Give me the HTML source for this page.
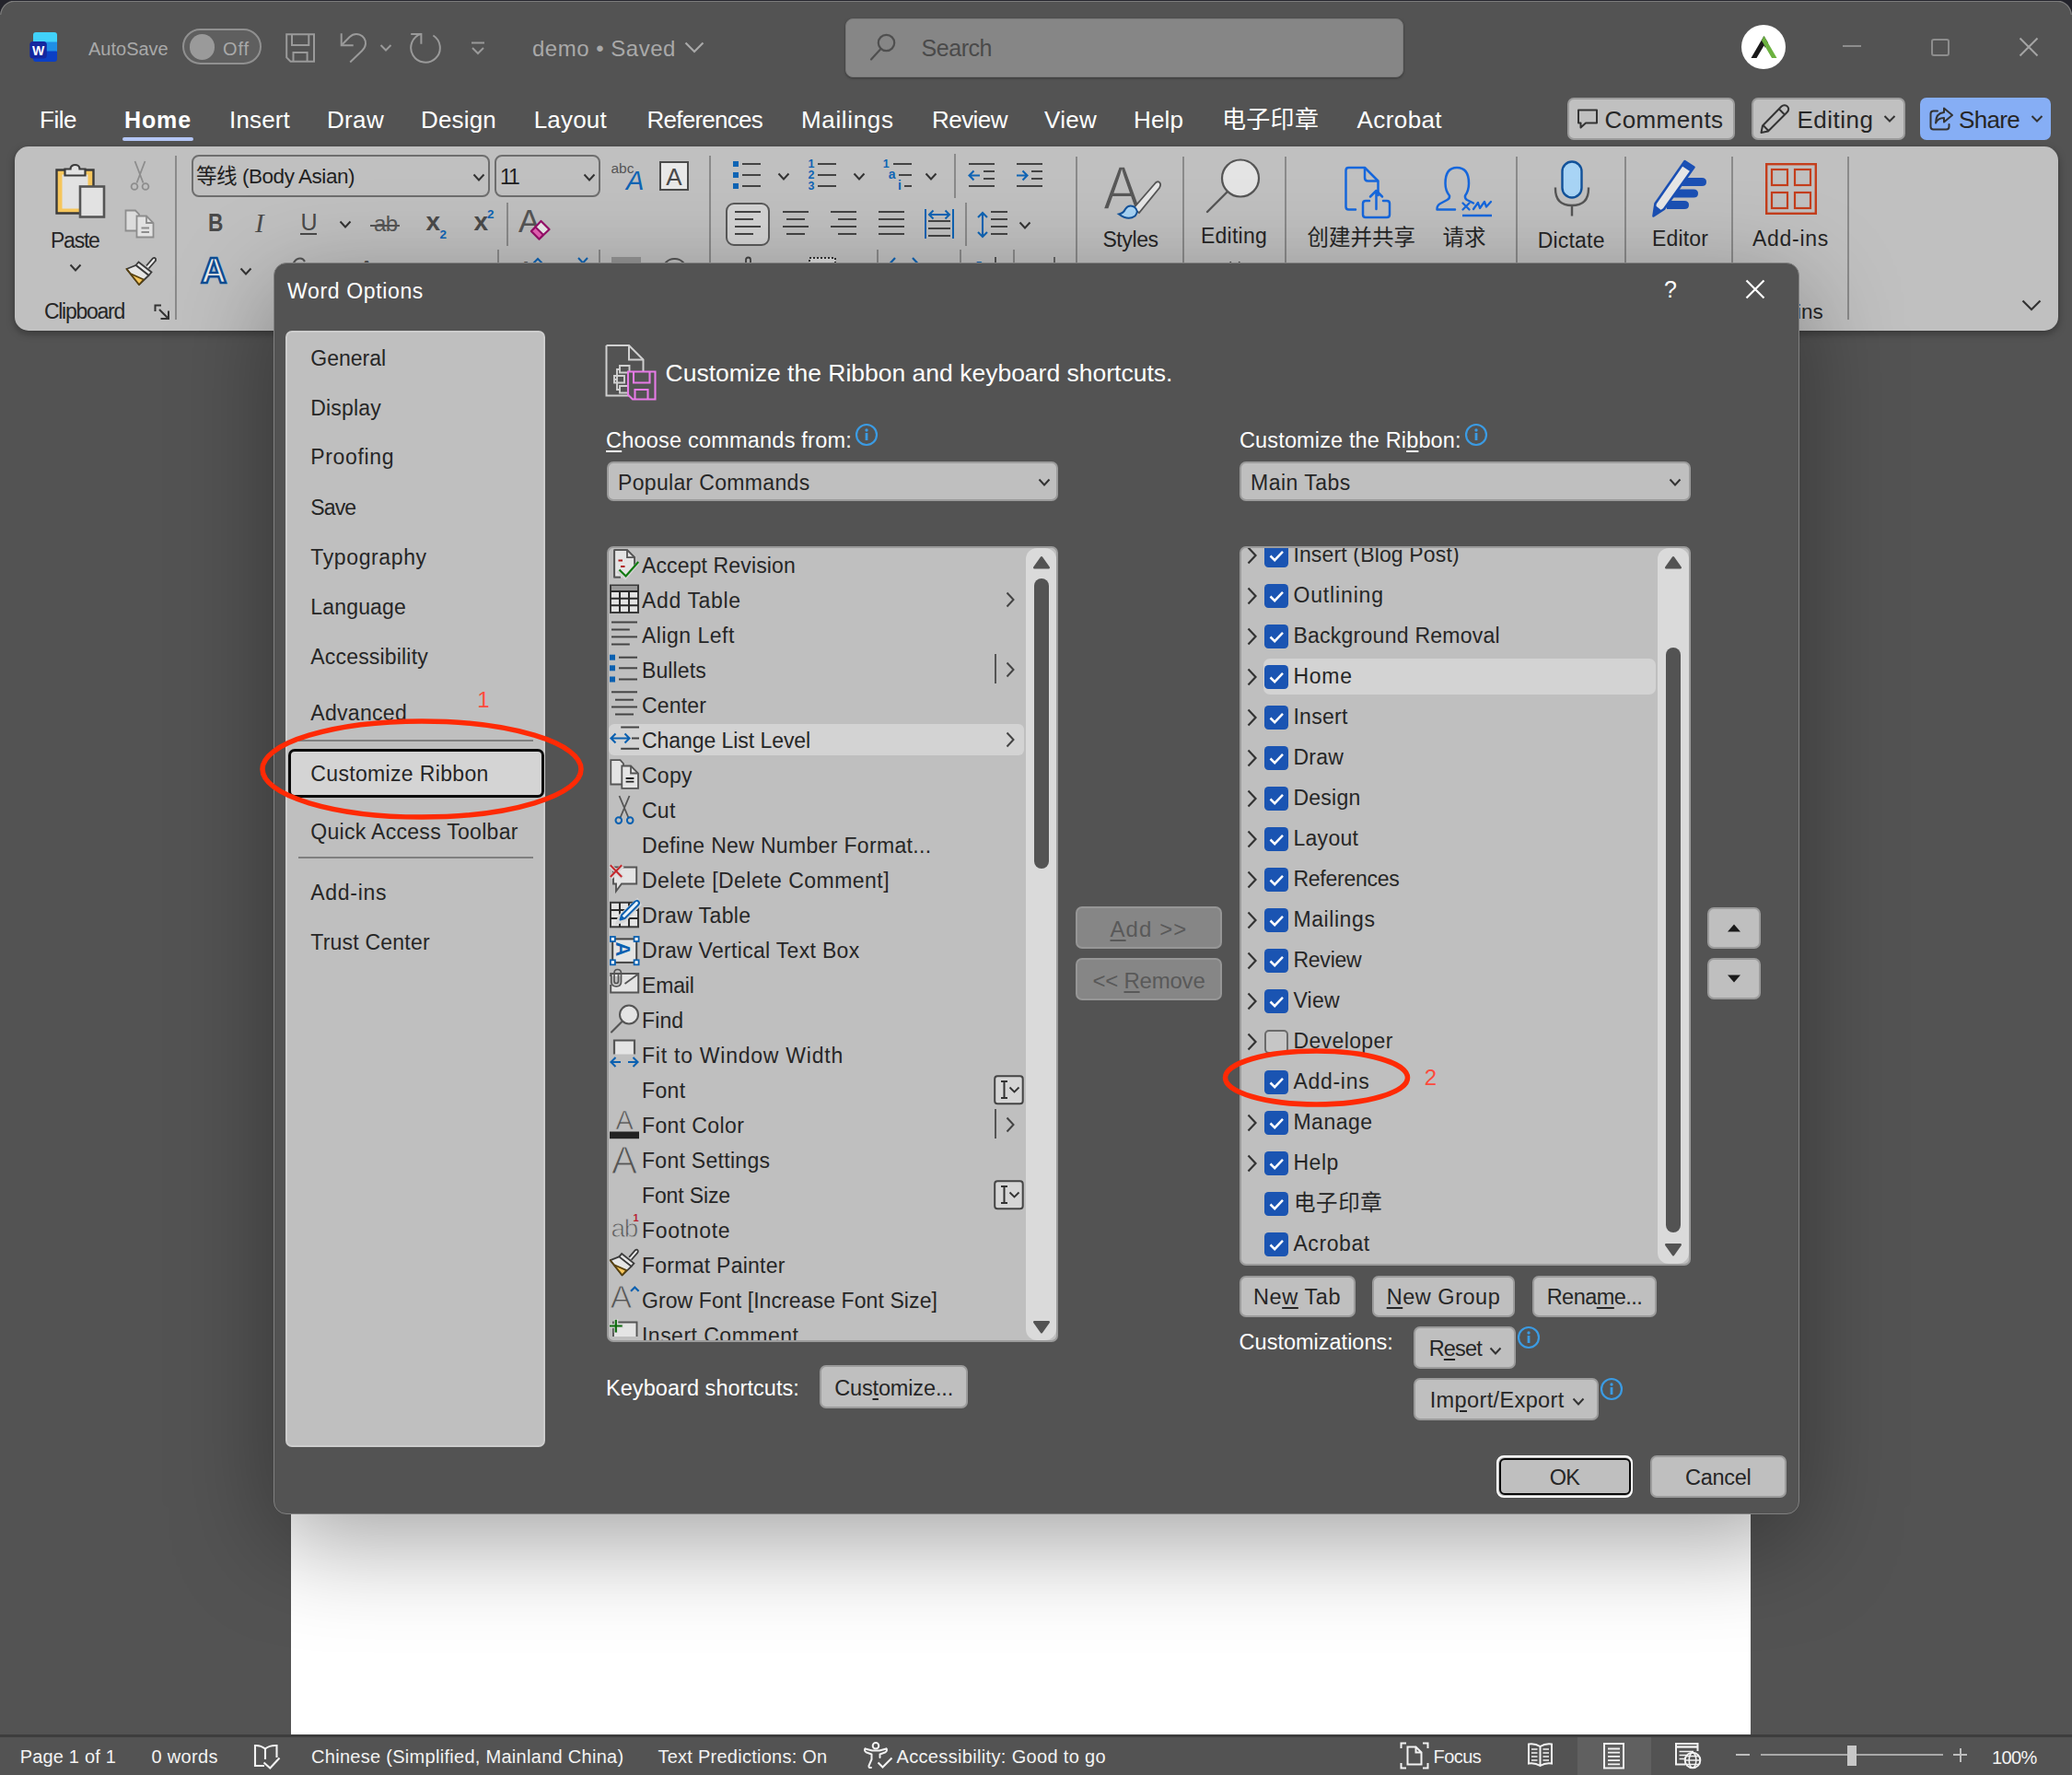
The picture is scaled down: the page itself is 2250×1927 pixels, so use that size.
<!DOCTYPE html>
<html lang="en"><head><meta charset="utf-8"><title>Word Options</title>
<style>
html,body{margin:0;padding:0}
body{width:2250px;height:1927px;overflow:hidden;background:#535353;position:relative;font-family:"Liberation Sans","Noto Sans CJK SC",sans-serif}
.b{position:absolute;box-sizing:border-box;display:block}
.t{position:absolute;white-space:nowrap;overflow:visible}
.t span{display:inline-block}
u{text-decoration:underline;text-underline-offset:3px;text-decoration-thickness:2px}

</style></head>
<body>
<div class="b" style="left:316.0px;top:360.0px;width:1585.0px;height:1524.0px;background:#ffffff;"></div>
<div class="b" style="left:0.0px;top:0.0px;width:2250.0px;height:1.0px;background:#25252d;"></div>
<div class="b" style="left:12.0px;top:1.0px;width:2226.0px;height:1.0px;background:#7c7c7c;"></div>
<svg class="b" style="left:0;top:0" width="16" height="16"><path d="M0 0H16C7 1 1 7 0 16Z" fill="#23232b"/><path d="M0.7 16C1.5 7.5 7.5 1.5 16 1.5" fill="none" stroke="#7c7c7c" stroke-width="1.2"/></svg>
<svg class="b" style="left:2234px;top:0" width="16" height="16"><path d="M16 0H0C9 1 15 7 16 16Z" fill="#23232b"/><path d="M15.3 16C14.5 7.5 8.5 1.5 0 1.5" fill="none" stroke="#7c7c7c" stroke-width="1.2"/></svg>
<svg class="b" style="left:0;top:1911px" width="16" height="16"><path d="M0 16H16C7 15 1 9 0 0Z" fill="#3a4a78"/></svg>
<svg class="b" style="left:2234px;top:1911px" width="16" height="16"><path d="M16 16H0C9 15 15 9 16 0Z" fill="#3a4a78"/></svg>
<svg class="b" style="left:31.0px;top:34.0px;" width="33" height="34" viewBox="0 0 33 34">
<rect x="5" y="1" width="26" height="12" rx="3" fill="#41d2fa"/>
<rect x="5" y="10" width="26" height="12" fill="#1f8fe6"/>
<rect x="5" y="20" width="26" height="13" rx="3" fill="#0b3fc4"/>
<rect x="5" y="8" width="26" height="3.5" fill="#41d2fa"/>
<rect x="5" y="17.5" width="26" height="4" fill="#1f8fe6"/>
<rect x="1.3" y="11" width="18.5" height="18.5" rx="3.5" fill="#1428a0"/>
<text x="10.6" y="25.5" font-family="Liberation Sans,sans-serif" font-weight="700" font-size="14" fill="#fff" text-anchor="middle">W</text>
</svg>
<div class="t" style="top:32.7px;height:40px;line-height:40px;font-size:20.0px;color:#a9a9a9;left:96.0px;"><span id="t1">AutoSave</span></div>
<div class="b" style="left:198.0px;top:31.0px;width:86.0px;height:39.0px;background:#5f5f5f;border:2.5px solid #909090;border-radius:20px;"></div>
<div class="b" style="left:205.5px;top:37.0px;width:27.5px;height:27.5px;background:#9a9a9a;border-radius:14px;"></div>
<div class="t" style="top:32.7px;height:40px;line-height:40px;font-size:20.0px;color:#a9a9a9;left:242.0px;letter-spacing:0.90px;"><span id="t2">Off</span></div>
<svg class="b" style="left:308.0px;top:34.0px;" width="36" height="36" viewBox="0 0 36 36"><path d="M3.2 3.2H33V32.7H7.5L3.2 28.4Z" fill="none" stroke="#9a9a9a" stroke-width="2"/><path d="M9 3.2V15H27.3V3.2M10.5 32.7V23H25.6V32.7" fill="none" stroke="#9a9a9a" stroke-width="2"/></svg>
<svg class="b" style="left:368.0px;top:34.0px;" width="34" height="36" viewBox="0 0 34 36"><path d="M2.7 2.2V15.2H15.7" fill="none" stroke="#9a9a9a" stroke-width="2"/><path d="M3.2 14.7L11.5 6.2Q16.5 1.6 22.5 3.6Q29.2 6.5 29 13.5Q28.8 17.5 25 21.2L12.2 33.5" fill="none" stroke="#9a9a9a" stroke-width="2"/></svg>
<svg class="b" style="left:412.0px;top:47.0px;" width="14" height="10" viewBox="0 0 14 10"><path d="M1.5 2L7 7.5L12.5 2" fill="none" stroke="#9a9a9a" stroke-width="2"/></svg>
<svg class="b" style="left:444.0px;top:34.0px;" width="36" height="36" viewBox="0 0 36 36"><path d="M13.4 2.8A15.8 15.8 0 1 0 26.4 4.5" fill="none" stroke="#9a9a9a" stroke-width="2"/><path d="M2.2 3.1H13.4V13.8" fill="none" stroke="#9a9a9a" stroke-width="2"/></svg>
<svg class="b" style="left:510.0px;top:44.0px;" width="18" height="18" viewBox="0 0 18 18"><path d="M2 2.5H16" stroke="#9a9a9a" stroke-width="2" fill="none"/><path d="M3 8L9 14L15 8" fill="none" stroke="#9a9a9a" stroke-width="2"/></svg>
<div class="t" style="top:28.7px;height:48px;line-height:48px;font-size:24.0px;color:#a9a9a9;left:578.0px;letter-spacing:0.51px;"><span id="t3">demo • Saved</span></div>
<svg class="b" style="left:743.0px;top:45.0px;" width="22" height="14" viewBox="0 0 22 14"><path d="M1.5 1.5L11 11L20.5 1.5" fill="none" stroke="#a9a9a9" stroke-width="2.2"/></svg>
<div class="b" style="left:917.5px;top:19.5px;width:606.5px;height:64.0px;background:#868686;border:1.5px solid #7a7a7a;border-radius:8px;box-shadow:0 1px 3px rgba(0,0,0,.35);"></div>
<svg class="b" style="left:944.0px;top:35.0px;" width="30" height="32" viewBox="0 0 30 32"><circle cx="18.5" cy="11.5" r="8.7" fill="none" stroke="#4f4f4f" stroke-width="2.2"/><path d="M12.5 18L2 29.5" stroke="#4f4f4f" stroke-width="2.2" stroke-linecap="round"/></svg>
<div class="t" style="top:26.5px;height:50px;line-height:50px;font-size:25.0px;color:#4a4a4a;left:1000.5px;letter-spacing:-0.45px;"><span id="t4">Search</span></div>
<div class="b" style="left:1891.0px;top:27.0px;width:48.0px;height:48.0px;background:#ffffff;border-radius:24px;"></div>
<svg class="b" style="left:1891.0px;top:27.0px;" width="48" height="48" viewBox="0 0 48 48"><path d="M11 35.5L24 13.5L37 35.5" fill="none" stroke="#161616" stroke-width="0"/><path d="M10.5 36L24.5 12L29 19.5L19.5 36Z" fill="#1a1a1a"/><path d="M24.5 12L38.5 36H33L22 17Z" fill="#6bb13f"/><path d="M16.5 36L24.5 22.5L32.5 36H28.5L24.5 29L20.5 36Z" fill="#fff"/><path d="M20 36L24.5 28L29 36Z" fill="#fff"/></svg>
<div class="b" style="left:2001.0px;top:49.0px;width:20.0px;height:2.0px;background:#8d8d8d;"></div>
<div class="b" style="left:2097.0px;top:41.5px;width:20.0px;height:19.5px;border:2px solid #8d8d8d;border-radius:3px;"></div>
<svg class="b" style="left:2192.0px;top:40.0px;" width="22" height="22" viewBox="0 0 22 22"><path d="M1.5 1.5L20.5 20.5M20.5 1.5L1.5 20.5" stroke="#a5a5a5" stroke-width="2" fill="none"/></svg>
<div class="t" style="top:104.0px;height:52px;line-height:52px;font-size:26.0px;color:#ffffff;left:43.0px;letter-spacing:-0.48px;"><span id="t5">File</span></div>
<div class="t" style="top:105.0px;height:50px;line-height:50px;font-size:25px;color:#ffffff;left:135.0px;letter-spacing:0.88px;font-weight:700;"><span id="t6">Home</span></div>
<div class="t" style="top:104.0px;height:52px;line-height:52px;font-size:26.0px;color:#ffffff;left:249.0px;letter-spacing:0.16px;"><span id="t7">Insert</span></div>
<div class="t" style="top:104.0px;height:52px;line-height:52px;font-size:26.0px;color:#ffffff;left:355.0px;letter-spacing:0.33px;"><span id="t8">Draw</span></div>
<div class="t" style="top:104.0px;height:52px;line-height:52px;font-size:26.0px;color:#ffffff;left:457.0px;letter-spacing:0.18px;"><span id="t9">Design</span></div>
<div class="t" style="top:104.0px;height:52px;line-height:52px;font-size:26.0px;color:#ffffff;left:579.7px;letter-spacing:0.20px;"><span id="t10">Layout</span></div>
<div class="t" style="top:104.0px;height:52px;line-height:52px;font-size:26.0px;color:#ffffff;left:702.5px;letter-spacing:-0.75px;"><span id="t11">References</span></div>
<div class="t" style="top:104.0px;height:52px;line-height:52px;font-size:26.0px;color:#ffffff;left:870.0px;letter-spacing:0.65px;"><span id="t12">Mailings</span></div>
<div class="t" style="top:104.0px;height:52px;line-height:52px;font-size:26.0px;color:#ffffff;left:1012.0px;letter-spacing:-0.54px;"><span id="t13">Review</span></div>
<div class="t" style="top:104.0px;height:52px;line-height:52px;font-size:26.0px;color:#ffffff;left:1134.0px;letter-spacing:0.28px;"><span id="t14">View</span></div>
<div class="t" style="top:104.0px;height:52px;line-height:52px;font-size:26.0px;color:#ffffff;left:1231.0px;letter-spacing:0.13px;"><span id="t15">Help</span></div>
<div class="t" style="top:103.5px;height:52px;line-height:52px;font-size:26px;color:#ffffff;left:1327.0px;letter-spacing:0.3px;"><span id="t16">电子印章</span></div>
<div class="t" style="top:104.0px;height:52px;line-height:52px;font-size:26.0px;color:#ffffff;left:1473.6px;letter-spacing:0.40px;"><span id="t17">Acrobat</span></div>
<div class="b" style="left:133.0px;top:149.0px;width:77.0px;height:4.0px;background:#b4c6f5;border-radius:2px;"></div>
<div class="b" style="left:1701.5px;top:105.5px;width:182.5px;height:46.5px;background:#c0c0c0;border:2px solid #9c9c9c;border-radius:7px;"></div>
<div class="b" style="left:1902.0px;top:105.5px;width:166.5px;height:46.5px;background:#c0c0c0;border:2px solid #9c9c9c;border-radius:7px;"></div>
<div class="b" style="left:2085.0px;top:105.5px;width:142.0px;height:46.5px;background:#86aef5;border-radius:7px;"></div>
<svg class="b" style="left:1711.0px;top:116.0px;" width="26" height="26" viewBox="0 0 26 26"><path d="M3 3.5H23V17.5H11L5.5 22.5V17.5H3Z" fill="none" stroke="#333" stroke-width="2" stroke-linejoin="round"/></svg>
<div class="t" style="top:103.5px;height:52px;line-height:52px;font-size:26.0px;color:#262626;left:1742.5px;letter-spacing:0.41px;"><span id="t18">Comments</span></div>
<svg class="b" style="left:1910.0px;top:112.0px;" width="34" height="34" viewBox="0 0 34 34"><path d="M24.5 3.5C26.5 1.5 29.5 2 31 3.7C32.5 5.5 32.5 8 30.5 10L10 30.5L2.5 32L4 24.5Z M22 6.5L28 12.5 M4.5 24L10.5 30" fill="none" stroke="#333" stroke-width="2" stroke-linejoin="round"/></svg>
<div class="t" style="top:103.5px;height:52px;line-height:52px;font-size:26.0px;color:#262626;left:1951.5px;letter-spacing:0.50px;"><span id="t19">Editing</span></div>
<svg class="b" style="left:2045.0px;top:124.0px;" width="14" height="10" viewBox="0 0 14 10"><path d="M1.5 2L7 7.5L12.5 2" fill="none" stroke="#333" stroke-width="2"/></svg>
<svg class="b" style="left:2093.0px;top:114.0px;" width="30" height="30" viewBox="0 0 30 30"><path d="M11 6.5H6.5Q3.5 6.5 3.5 9.5V23.5Q3.5 26.5 6.5 26.5H20.5Q23.5 26.5 23.5 23.5V21" fill="none" stroke="#333" stroke-width="2" stroke-linecap="round"/><path d="M18 3.5L27 11L18 18.5V14C13 14 10.5 16 9 19.5C9 12.5 12.5 8.5 18 8Z" fill="none" stroke="#333" stroke-width="2" stroke-linejoin="round"/></svg>
<div class="t" style="top:103.5px;height:52px;line-height:52px;font-size:26.0px;color:#262626;left:2127.0px;letter-spacing:-0.68px;"><span id="t20">Share</span></div>
<svg class="b" style="left:2205.0px;top:124.0px;" width="14" height="10" viewBox="0 0 14 10"><path d="M1.5 2L7 7.5L12.5 2" fill="none" stroke="#333" stroke-width="2"/></svg>
<div class="b" style="left:16.0px;top:159.0px;width:2219.0px;height:200.0px;background:#c0c0c0;border-radius:15px;box-shadow:0 3px 8px rgba(0,0,0,.35);"></div>
<svg class="b" style="left:58.0px;top:176.0px;" width="58" height="62" viewBox="0 0 58 62">
<path d="M3.5 8.5H43.5V55.5H3.5Z" fill="#f6c65c" stroke="#3b3b3b" stroke-width="2.4"/>
<path d="M9.5 13.5H37.5V50.5H9.5Z" fill="#e2e2e2"/>
<path d="M12.5 14.5V7.5H18.5C18.5 1.5 28.5 1.5 28.5 7.5H34.5V14.5Z" fill="#e2e2e2" stroke="#3b3b3b" stroke-width="2.2"/>
<rect x="29" y="26.5" width="26" height="33" fill="#e2e2e2" stroke="#555" stroke-width="2.6"/>
</svg>
<div class="t" style="top:238.0px;height:46px;line-height:46px;font-size:23.0px;color:#262626;left:55.0px;letter-spacing:-1.23px;"><span id="t21">Paste</span></div>
<svg class="b" style="left:74.5px;top:286.0px;" width="14" height="10" viewBox="0 0 14 10"><path d="M1.5 1.5L7.0 7.5L12.5 1.5" fill="none" stroke="#333" stroke-width="2"/></svg>
<svg class="b" style="left:141.0px;top:174.0px;" width="22" height="34" viewBox="0 0 22 34"><path d="M5.5 1L14.5 24.5M16.5 1L7.5 24.5" stroke="#8d8d8d" stroke-width="1.8" fill="none"/><circle cx="5" cy="28.5" r="3.4" fill="none" stroke="#8d8d8d" stroke-width="1.8"/><circle cx="17" cy="28.5" r="3.4" fill="none" stroke="#8d8d8d" stroke-width="1.8"/></svg>
<svg class="b" style="left:135.0px;top:226.0px;" width="34" height="34" viewBox="0 0 34 34"><path d="M1.5 2.5H12L16 6.5V24.5H1.5Z" fill="#dcdcdc" stroke="#8d8d8d" stroke-width="1.8"/><path d="M13.5 8.5H24L31.5 16V31.5H13.5Z" fill="#e2e2e2" stroke="#8d8d8d" stroke-width="1.8"/><path d="M24 8.5V16H31.5" fill="none" stroke="#8d8d8d" stroke-width="1.8"/><path d="M18.5 21.5H27M18.5 26H27" stroke="#8d8d8d" stroke-width="1.8"/></svg>
<svg class="b" style="left:135.0px;top:278.0px;" width="35" height="33" viewBox="0 0 35 33"><path d="M24 10.5L31 2.5Q33 1 34 3Q34.5 4.5 33.5 5.5L26.5 13.5" fill="#eee" stroke="#3b3b3b" stroke-width="1.8"/><path d="M15.5 6.5L29.5 17.5L26.5 21L12.5 10Z" fill="#e6e6e6" stroke="#3b3b3b" stroke-width="1.8"/><path d="M12.5 10L26.5 21L16 31L2.5 14Z" fill="#e6e6e6" stroke="#3b3b3b" stroke-width="1.8" stroke-linejoin="round"/><path d="M6.5 19L21 25.5L16 31L2.5 14Z" fill="#f6c65c" stroke="#5a4310" stroke-width="1.8" stroke-linejoin="round"/></svg>
<div class="t" style="top:315.4px;height:46px;line-height:46px;font-size:23.0px;color:#262626;left:47.9px;letter-spacing:-1.27px;"><span id="t22">Clipboard</span></div>
<svg class="b" style="left:167.0px;top:330.0px;" width="18" height="18" viewBox="0 0 18 18"><path d="M1.5 8V1.5H8" fill="none" stroke="#333" stroke-width="2"/><path d="M6 6L15.5 15.5M16 7.5V16H7.5" fill="none" stroke="#333" stroke-width="2"/></svg>
<div class="b" style="left:189.7px;top:169.0px;width:2.0px;height:177.5px;background:#8a8a8a;"></div>
<div class="b" style="left:208.0px;top:167.5px;width:323.5px;height:46.5px;border:2px solid #6e6e6e;border-radius:8px;"></div>
<div class="b" style="left:536.5px;top:167.5px;width:115.5px;height:46.5px;border:2px solid #6e6e6e;border-radius:8px;"></div>
<div class="t" style="top:168.7px;height:45px;line-height:45px;font-size:22.5px;color:#1f1f1f;left:213.0px;letter-spacing:-0.45px;"><span id="t23">等线 (Body Asian)</span></div>
<svg class="b" style="left:513.0px;top:187.5px;" width="14" height="10" viewBox="0 0 14 10"><path d="M1.5 1.5L7.0 7.5L12.5 1.5" fill="none" stroke="#333" stroke-width="2"/></svg>
<div class="t" style="top:168.7px;height:46px;line-height:46px;font-size:23.0px;color:#1f1f1f;left:543.0px;letter-spacing:-2.20px;"><span id="t24">11</span></div>
<svg class="b" style="left:632.5px;top:187.5px;" width="14" height="10" viewBox="0 0 14 10"><path d="M1.5 1.5L7.0 7.5L12.5 1.5" fill="none" stroke="#333" stroke-width="2"/></svg>
<div class="t" style="top:166.5px;height:31px;line-height:31px;font-size:15.5px;color:#555;left:663.4px;"><span id="t25">abc</span></div>
<div class="t" style="top:166.5px;height:58px;line-height:58px;font-size:29px;color:#0f64b4;left:680.0px;font-style:italic;"><span id="t26">A</span></div>
<div class="b" style="left:716.0px;top:175.0px;width:32.0px;height:32.0px;background:#e8e8e8;border:2.2px solid #4a4a4a;"></div>
<div class="t" style="top:165.5px;height:52px;line-height:52px;font-size:26px;color:#4a4a4a;left:232.0px;width:1000px;text-align:center;"><span id="t27">A</span></div>
<div class="b" style="left:770.0px;top:169.0px;width:2.0px;height:123.0px;background:#8a8a8a;"></div>
<div class="t" style="top:214.5px;height:54px;line-height:54px;font-size:27px;color:#4a4a4a;left:225.5px;font-weight:700;transform:scaleX(.84);transform-origin:left center;"><span id="t28">B</span></div>
<div class="t" style="top:212.5px;height:58px;line-height:58px;font-size:29px;color:#4a4a4a;left:277.0px;font-family:'Liberation Serif',serif;font-style:italic;"><span id="t29">I</span></div>
<div class="t" style="top:215.5px;height:50px;line-height:50px;font-size:25px;color:#4a4a4a;left:326.5px;"><span id="t30">U</span></div>
<div class="b" style="left:326.0px;top:252.8px;width:18.0px;height:2.0px;background:#4a4a4a;"></div>
<svg class="b" style="left:367.5px;top:238.5px;" width="14" height="10" viewBox="0 0 14 10"><path d="M1.5 1.5L7.0 7.5L12.5 1.5" fill="none" stroke="#333" stroke-width="2"/></svg>
<div class="t" style="top:219.0px;height:48px;line-height:48px;font-size:24px;color:#555;left:406.0px;letter-spacing:-0.5px;"><span id="t31">ab</span></div>
<div class="b" style="left:402.0px;top:244.3px;width:32.0px;height:1.7px;background:#555;"></div>
<div class="t" style="top:213.0px;height:56px;line-height:56px;font-size:28px;color:#4a4a4a;left:462.5px;font-weight:700;"><span id="t32">x</span></div>
<div class="t" style="top:240.5px;height:27px;line-height:27px;font-size:13.5px;color:#0f64b4;left:477.5px;font-weight:700;"><span id="t33">2</span></div>
<div class="t" style="top:213.0px;height:56px;line-height:56px;font-size:28px;color:#4a4a4a;left:514.5px;font-weight:700;"><span id="t34">x</span></div>
<div class="t" style="top:218.5px;height:27px;line-height:27px;font-size:13.5px;color:#0f64b4;left:529.0px;font-weight:700;"><span id="t35">2</span></div>
<div class="b" style="left:549.8px;top:219.7px;width:2.0px;height:46.9px;background:#8a8a8a;"></div>
<div class="t" style="top:204.5px;height:70px;line-height:70px;font-size:35px;color:#555;left:563.0px;"><span id="t36">A</span></div>
<svg class="b" style="left:575.0px;top:238.0px;" width="24" height="23" viewBox="0 0 24 23"><path d="M12.5 2L21.5 11L10.5 21.5L2 13Z" fill="#ececec" stroke="#97106a" stroke-width="2.2" stroke-linejoin="round"/><path d="M6.5 8.5L15 17L10.5 21.5L2 13Z" fill="#e861b5" stroke="#97106a" stroke-width="2" stroke-linejoin="round"/></svg>
<div class="t" style="top:255.0px;height:78px;line-height:78px;font-size:39px;color:#ececec;left:-268.0px;width:1000px;text-align:center;font-weight:700;-webkit-text-stroke:2.4px #0f4d92;text-shadow:0 0 3px #9fd0f5,0 0 3px #9fd0f5,0 0 2px #9fd0f5;"><span id="t37">A</span></div>
<svg class="b" style="left:259.5px;top:290.0px;" width="14" height="10" viewBox="0 0 14 10"><path d="M1.5 1.5L7.0 7.5L12.5 1.5" fill="none" stroke="#333" stroke-width="2"/></svg>
<svg class="b" style="left:310.0px;top:276.0px;" width="30" height="12" viewBox="0 0 30 12"><path d="M8 12C10 4 18 2 21 8" fill="none" stroke="#555" stroke-width="2"/></svg>
<div class="t" style="top:263.0px;height:60px;line-height:60px;font-size:30px;color:#555;left:-102.0px;width:1000px;text-align:center;"><span id="t38">A</span></div>
<div class="b" style="left:539.8px;top:271.0px;width:2.0px;height:21.0px;background:#8a8a8a;"></div>
<div class="t" style="top:264.0px;height:60px;line-height:60px;font-size:30px;color:#555;left:71.0px;width:1000px;text-align:center;"><span id="t39">A</span></div>
<svg class="b" style="left:578.0px;top:279.0px;" width="12" height="8" viewBox="0 0 12 8"><path d="M1.5 6.5L6 2L10.5 6.5" fill="none" stroke="#0f64b4" stroke-width="2"/></svg>
<svg class="b" style="left:626.0px;top:279.0px;" width="14" height="8" viewBox="0 0 14 8"><path d="M2 1L7 6.5L12 1" fill="none" stroke="#0f64b4" stroke-width="2"/></svg>
<div class="b" style="left:650.2px;top:271.0px;width:2.0px;height:21.0px;background:#8a8a8a;"></div>
<div class="b" style="left:664.0px;top:279.0px;width:32.0px;height:13.0px;background:#959595;"></div>
<div class="b" style="left:718.5px;top:279.5px;width:27.0px;height:26.5px;border:2px solid #555;border-radius:14px;"></div>
<div class="b" style="left:796.0px;top:174.8px;width:6.0px;height:6.0px;background:#0f64b4;"></div>
<div class="b" style="left:805.7px;top:176.8px;width:20.3px;height:2.0px;background:#444;"></div>
<div class="b" style="left:796.0px;top:187.1px;width:6.0px;height:6.0px;background:#0f64b4;"></div>
<div class="b" style="left:805.7px;top:189.1px;width:20.3px;height:2.0px;background:#444;"></div>
<div class="b" style="left:796.0px;top:198.9px;width:6.0px;height:6.0px;background:#0f64b4;"></div>
<div class="b" style="left:805.7px;top:200.9px;width:20.3px;height:2.0px;background:#444;"></div>
<svg class="b" style="left:844.0px;top:187.0px;" width="14" height="10" viewBox="0 0 14 10"><path d="M1.5 1.5L7.0 7.5L12.5 1.5" fill="none" stroke="#333" stroke-width="2"/></svg>
<div class="t" style="top:165.6px;height:25px;line-height:25px;font-size:12.5px;color:#0f64b4;left:381.0px;width:1000px;text-align:center;font-weight:700;"><span id="t40">1</span></div>
<div class="b" style="left:888.0px;top:176.8px;width:20.0px;height:2.0px;background:#444;"></div>
<div class="t" style="top:177.9px;height:25px;line-height:25px;font-size:12.5px;color:#0f64b4;left:381.0px;width:1000px;text-align:center;font-weight:700;"><span id="t41">2</span></div>
<div class="b" style="left:888.0px;top:189.1px;width:20.0px;height:2.0px;background:#444;"></div>
<div class="t" style="top:189.7px;height:25px;line-height:25px;font-size:12.5px;color:#0f64b4;left:381.0px;width:1000px;text-align:center;font-weight:700;"><span id="t42">3</span></div>
<div class="b" style="left:888.0px;top:200.9px;width:20.0px;height:2.0px;background:#444;"></div>
<svg class="b" style="left:925.7px;top:187.0px;" width="14" height="10" viewBox="0 0 14 10"><path d="M1.5 1.5L7.0 7.5L12.5 1.5" fill="none" stroke="#333" stroke-width="2"/></svg>
<div class="t" style="top:165.5px;height:25px;line-height:25px;font-size:12.5px;color:#0f64b4;left:462.3px;width:1000px;text-align:center;font-weight:700;"><span id="t43">1</span></div>
<div class="b" style="left:970.4px;top:176.8px;width:19.6px;height:2.0px;background:#444;"></div>
<div class="t" style="top:175.3px;height:28px;line-height:28px;font-size:14px;color:#0f64b4;left:468.7px;width:1000px;text-align:center;font-weight:700;"><span id="t44">a</span></div>
<div class="b" style="left:976.0px;top:189.1px;width:14.0px;height:2.0px;background:#444;"></div>
<div class="t" style="top:186.6px;height:28px;line-height:28px;font-size:14px;color:#0f64b4;left:477.0px;width:1000px;text-align:center;font-weight:700;"><span id="t45">i</span></div>
<div class="b" style="left:982.4px;top:200.9px;width:7.6px;height:2.0px;background:#444;"></div>
<svg class="b" style="left:1003.7px;top:187.0px;" width="14" height="10" viewBox="0 0 14 10"><path d="M1.5 1.5L7.0 7.5L12.5 1.5" fill="none" stroke="#333" stroke-width="2"/></svg>
<div class="b" style="left:1036.0px;top:167.0px;width:2.0px;height:47.8px;background:#8a8a8a;"></div>
<div class="b" style="left:1052.0px;top:176.8px;width:27.8px;height:2.0px;background:#444;"></div>
<div class="b" style="left:1052.0px;top:200.9px;width:27.8px;height:2.0px;background:#444;"></div>
<div class="b" style="left:1068.0px;top:184.9px;width:11.8px;height:2.0px;background:#444;"></div>
<div class="b" style="left:1068.0px;top:193.2px;width:11.8px;height:2.0px;background:#444;"></div>
<svg class="b" style="left:1051.0px;top:183.5px;" width="14" height="13" viewBox="0 0 14 13"><path d="M1.5 6.5H13M6.5 1.5L1.5 6.5L6.5 11.5" fill="none" stroke="#0f64b4" stroke-width="2.1"/></svg>
<div class="b" style="left:1104.0px;top:176.8px;width:28.0px;height:2.0px;background:#444;"></div>
<div class="b" style="left:1104.0px;top:200.9px;width:28.0px;height:2.0px;background:#444;"></div>
<div class="b" style="left:1120.4px;top:184.9px;width:11.6px;height:2.0px;background:#444;"></div>
<div class="b" style="left:1120.4px;top:193.2px;width:11.6px;height:2.0px;background:#444;"></div>
<svg class="b" style="left:1103.0px;top:183.5px;" width="14" height="13" viewBox="0 0 14 13"><path d="M1 6.5H12.5M7.5 1.5L12.5 6.5L7.5 11.5" fill="none" stroke="#0f64b4" stroke-width="2.1"/></svg>
<div class="b" style="left:788.3px;top:219.7px;width:47.3px;height:46.9px;background:#d4d4d4;border:2px solid #5a5a5a;border-radius:9px;"></div>
<div class="b" style="left:798.0px;top:228.9px;width:28.0px;height:2.0px;background:#444;"></div>
<div class="b" style="left:850.0px;top:228.9px;width:28.0px;height:2.0px;background:#444;"></div>
<div class="b" style="left:901.9px;top:228.9px;width:27.9px;height:2.0px;background:#444;"></div>
<div class="b" style="left:954.0px;top:228.9px;width:28.0px;height:2.0px;background:#444;"></div>
<div class="b" style="left:1076.0px;top:228.9px;width:18.0px;height:2.0px;background:#444;"></div>
<div class="b" style="left:798.0px;top:237.0px;width:19.7px;height:2.0px;background:#444;"></div>
<div class="b" style="left:854.0px;top:237.0px;width:20.0px;height:2.0px;background:#444;"></div>
<div class="b" style="left:910.0px;top:237.0px;width:19.8px;height:2.0px;background:#444;"></div>
<div class="b" style="left:954.0px;top:237.0px;width:28.0px;height:2.0px;background:#444;"></div>
<div class="b" style="left:1076.0px;top:237.0px;width:18.0px;height:2.0px;background:#444;"></div>
<div class="b" style="left:798.0px;top:245.0px;width:28.0px;height:2.0px;background:#444;"></div>
<div class="b" style="left:850.0px;top:245.0px;width:28.0px;height:2.0px;background:#444;"></div>
<div class="b" style="left:901.9px;top:245.0px;width:27.9px;height:2.0px;background:#444;"></div>
<div class="b" style="left:954.0px;top:245.0px;width:28.0px;height:2.0px;background:#444;"></div>
<div class="b" style="left:1076.0px;top:245.0px;width:18.0px;height:2.0px;background:#444;"></div>
<div class="b" style="left:798.0px;top:253.0px;width:19.7px;height:2.0px;background:#444;"></div>
<div class="b" style="left:854.0px;top:253.0px;width:20.0px;height:2.0px;background:#444;"></div>
<div class="b" style="left:910.0px;top:253.0px;width:19.8px;height:2.0px;background:#444;"></div>
<div class="b" style="left:954.0px;top:253.0px;width:28.0px;height:2.0px;background:#444;"></div>
<div class="b" style="left:1076.0px;top:253.0px;width:18.0px;height:2.0px;background:#444;"></div>
<div class="b" style="left:1003.6px;top:227.0px;width:2.2px;height:32.0px;background:#0f64b4;"></div>
<div class="b" style="left:1034.3px;top:227.0px;width:2.2px;height:32.0px;background:#0f64b4;"></div>
<div class="b" style="left:1008.4px;top:239.0px;width:23.2px;height:2.0px;background:#444;"></div>
<div class="b" style="left:1008.4px;top:247.0px;width:23.2px;height:2.0px;background:#444;"></div>
<div class="b" style="left:1008.4px;top:255.0px;width:23.2px;height:2.0px;background:#444;"></div>
<svg class="b" style="left:1007.0px;top:226.5px;" width="26" height="12" viewBox="0 0 26 12"><path d="M2 6H24M6.5 1.5L2 6L6.5 10.5M19.5 1.5L24 6L19.5 10.5" fill="none" stroke="#0f64b4" stroke-width="2"/></svg>
<div class="b" style="left:1048.0px;top:219.7px;width:2.0px;height:46.9px;background:#8a8a8a;"></div>
<svg class="b" style="left:1060.0px;top:228.5px;" width="14" height="30" viewBox="0 0 14 30"><path d="M7 2V28M2 7L7 2L12 7M2 23L7 28L12 23" fill="none" stroke="#0f64b4" stroke-width="2.1"/></svg>
<svg class="b" style="left:1106.0px;top:239.5px;" width="14" height="10" viewBox="0 0 14 10"><path d="M1.5 1.5L7.0 7.5L12.5 1.5" fill="none" stroke="#333" stroke-width="2"/></svg>
<div class="b" style="left:952.0px;top:271.0px;width:2.0px;height:21.0px;background:#8a8a8a;"></div>
<div class="b" style="left:1041.8px;top:271.0px;width:2.0px;height:21.0px;background:#8a8a8a;"></div>
<div class="b" style="left:1099.7px;top:271.0px;width:2.0px;height:21.0px;background:#8a8a8a;"></div>
<svg class="b" style="left:878.0px;top:278.5px;" width="30" height="10" viewBox="0 0 30 10"><rect x="1" y="1" width="28" height="12" fill="#dcdcdc" stroke="#333" stroke-width="2" stroke-dasharray="2 2"/></svg>
<svg class="b" style="left:965.0px;top:279.0px;" width="34" height="8" viewBox="0 0 34 8"><path d="M7 1L1.5 7M26 1L31.5 7" stroke="#0f64b4" stroke-width="2.2" fill="none"/></svg>
<div class="t" style="top:266.0px;height:56px;line-height:56px;font-size:28px;color:#0f64b4;left:563.0px;width:1000px;text-align:center;font-weight:700;"><span id="t46">A</span></div>
<div class="b" style="left:1080.0px;top:279.0px;width:2.0px;height:13.0px;background:#555;"></div>
<div class="b" style="left:1143.5px;top:279.0px;width:2.0px;height:13.0px;background:#666;"></div>
<svg class="b" style="left:808.0px;top:278.0px;" width="10" height="8" viewBox="0 0 10 8"><path d="M2 8V4Q2 1.5 4.5 1.5Q7 1.5 7 4V8" fill="none" stroke="#444" stroke-width="1.8"/></svg>
<div class="b" style="left:1168.0px;top:169.5px;width:2.0px;height:177.0px;background:#8a8a8a;"></div>
<div class="b" style="left:1284.0px;top:169.5px;width:2.0px;height:177.0px;background:#8a8a8a;"></div>
<div class="b" style="left:1395.0px;top:169.5px;width:2.0px;height:177.0px;background:#8a8a8a;"></div>
<div class="b" style="left:1646.0px;top:169.5px;width:2.0px;height:177.0px;background:#8a8a8a;"></div>
<div class="b" style="left:1764.0px;top:169.5px;width:2.0px;height:177.0px;background:#8a8a8a;"></div>
<div class="b" style="left:1880.0px;top:169.5px;width:2.0px;height:177.0px;background:#8a8a8a;"></div>
<div class="b" style="left:2006.0px;top:169.5px;width:2.0px;height:177.0px;background:#8a8a8a;"></div>
<div class="t" style="top:136.5px;height:134px;line-height:134px;font-size:67px;color:#585858;left:717.5px;width:1000px;text-align:center;-webkit-text-stroke:1.6px #c0c0c0;transform:scaleX(.9);"><span id="t47">A</span></div>
<svg class="b" style="left:1210.0px;top:194.0px;" width="54" height="46" viewBox="0 0 54 46"><path d="M48.5 3.5Q51.5 5.5 49 10L27 37L20.5 32.5L43.5 6Q46 2.5 48.5 3.5Z" fill="#e6e6e6" stroke="#555" stroke-width="1.8"/><path d="M5 38.5Q10 37.5 12 33Q15.5 27.5 21.5 30.5Q27.5 35 22.5 40.5Q15 46 5 38.5Z" fill="#a8d4f5" stroke="#12529a" stroke-width="2"/></svg>
<div class="t" style="top:237.0px;height:46px;line-height:46px;font-size:23.0px;color:#262626;left:1197.4px;letter-spacing:-0.39px;"><span id="t48">Styles</span></div>
<svg class="b" style="left:1306.0px;top:171.0px;" width="66" height="64" viewBox="0 0 66 64"><circle cx="41" cy="22.5" r="20" fill="#e4e4e4" stroke="#555" stroke-width="2.2"/><path d="M26.5 37.5L5 59" stroke="#555" stroke-width="2.4" stroke-linecap="round"/></svg>
<div class="t" style="top:232.9px;height:46px;line-height:46px;font-size:23.0px;color:#262626;left:1304.0px;letter-spacing:0.24px;"><span id="t49">Editing</span></div>
<svg class="b" style="left:1334.0px;top:282.5px;" width="14" height="10" viewBox="0 0 14 10"><path d="M1.5 1.5L7.0 7.5L12.5 1.5" fill="none" stroke="#333" stroke-width="2"/></svg>
<svg class="b" style="left:1458.0px;top:179.0px;" width="56" height="60" viewBox="0 0 56 60"><path d="M14 48.5H6.5Q3.5 48.5 3.5 45.5V6Q3.5 3 6.5 3H24L38.5 17.5V33" fill="none" stroke="#1667dc" stroke-width="2.5" stroke-linejoin="round" stroke-linecap="round"/><path d="M24 3V14Q24 17.5 27.5 17.5H38.5" fill="none" stroke="#1667dc" stroke-width="2.5"/><path d="M29 39H25Q22 39 22 42V54Q22 57 25 57H48Q51 57 51 54V42Q51 39 48 39H44" fill="none" stroke="#1667dc" stroke-width="2.5" stroke-linecap="round"/><path d="M36.5 48V28.5M30 34.5L36.5 28L43 34.5" fill="none" stroke="#1667dc" stroke-width="2.5" stroke-linecap="round" stroke-linejoin="round"/></svg>
<div class="t" style="top:234.5px;height:47px;line-height:47px;font-size:23.5px;color:#262626;left:978.2px;width:1000px;text-align:center;"><span id="t50">创建并共享</span></div>
<div class="t" style="top:279.0px;height:46px;line-height:46px;font-size:23px;color:#262626;left:978.5px;width:1000px;text-align:center;letter-spacing:1px;"><span id="t51">Adobe PDF</span></div>
<svg class="b" style="left:1557.0px;top:178.0px;" width="66" height="60" viewBox="0 0 66 60"><path d="M43 42.5L36 39Q33.5 37.5 34 34.5Q38 29 38 21Q38 4 25 4Q12.5 4 12.5 21Q12.5 29 17 34.5Q17.5 37.5 14.5 39L7 43Q3 45.5 3.5 49.5H23" fill="none" stroke="#1667dc" stroke-width="2.5" stroke-linecap="round" stroke-linejoin="round"/><path d="M31.5 42.5L38.5 49.5M38.5 42.5L31.5 49.5" stroke="#1667dc" stroke-width="2.3" stroke-linecap="round"/><path d="M43 49L48 42L50 48L55 41L57 46.5L62 41" fill="none" stroke="#1667dc" stroke-width="2.3" stroke-linecap="round" stroke-linejoin="round"/><path d="M31 56H63" stroke="#1667dc" stroke-width="2.5"/></svg>
<div class="t" style="top:234.5px;height:47px;line-height:47px;font-size:23.5px;color:#262626;left:1090.0px;width:1000px;text-align:center;"><span id="t52">请求</span></div>
<div class="t" style="top:278.5px;height:47px;line-height:47px;font-size:23.5px;color:#262626;left:1090.0px;width:1000px;text-align:center;"><span id="t53">签名</span></div>
<svg class="b" style="left:1685.0px;top:173.0px;" width="44" height="64" viewBox="0 0 44 64"><rect x="11.5" y="2.5" width="21" height="39" rx="10.5" fill="#a8d4f5" stroke="#12529a" stroke-width="2.4"/><path d="M4 30.5V32Q4 50 22 50Q40 50 40 32V30.5" fill="none" stroke="#555" stroke-width="2.4"/><path d="M22 50V61.5" stroke="#555" stroke-width="2.4"/></svg>
<div class="t" style="top:237.6px;height:46px;line-height:46px;font-size:23.0px;color:#262626;left:1669.7px;letter-spacing:0.20px;"><span id="t54">Dictate</span></div>
<svg class="b" style="left:1791.0px;top:172.0px;" width="66" height="66" viewBox="0 0 66 66"><path d="M31 21H57Q62 21 62 25.5Q62 30 57 30H31Z M25 33.5H48Q53 33.5 53 38Q53 42.5 48 42.5H25Z M19 46H38Q43 46 43 50.5Q43 55 38 55H19Z" fill="#1b50b4"/><path d="M38.5 3L48.5 9.5L16 55L4.5 62.5L6.5 49Z" fill="#e6e6e6" stroke="#1b50b4" stroke-width="2.6" stroke-linejoin="round"/><path d="M38.5 3L48.5 9.5L45 14.5L35 8Z" fill="#1b50b4"/><path d="M6.5 51L14 57L4.5 62.5Z" fill="#1b50b4"/></svg>
<div class="t" style="top:235.6px;height:46px;line-height:46px;font-size:23.0px;color:#262626;left:1794.0px;letter-spacing:0.15px;"><span id="t55">Editor</span></div>
<svg class="b" style="left:1916.0px;top:176.0px;" width="58" height="58" viewBox="0 0 58 58"><rect x="2.2" y="2.2" width="53.6" height="53.6" fill="none" stroke="#c43e1c" stroke-width="2.4"/><rect x="8" y="8" width="17" height="17" fill="none" stroke="#c43e1c" stroke-width="2.2"/><rect x="33" y="8" width="17" height="17" fill="none" stroke="#c43e1c" stroke-width="2.2"/><rect x="8" y="33" width="17" height="17" fill="none" stroke="#c43e1c" stroke-width="2.2"/><rect x="33" y="33" width="17" height="17" fill="none" stroke="#c43e1c" stroke-width="2.2"/></svg>
<div class="t" style="top:235.6px;height:46px;line-height:46px;font-size:23.0px;color:#262626;left:1903.0px;letter-spacing:0.72px;"><span id="t56">Add-ins</span></div>
<div class="t" style="top:316.3px;height:45px;line-height:45px;font-size:22.5px;color:#262626;left:1903.5px;"><span id="t57">Add-ins</span></div>
<svg class="b" style="left:2195.0px;top:325.0px;" width="22" height="14" viewBox="0 0 22 14"><path d="M1.5 1.5L11 11L20.5 1.5" fill="none" stroke="#333" stroke-width="2.2"/></svg>
<div class="b" style="left:0.0px;top:1883.0px;width:2250.0px;height:44.0px;background:#535353;border-top:3px solid #3d3d3d;"></div>
<div class="b" style="left:1713.0px;top:1886.0px;width:80.0px;height:41.0px;background:#606060;"></div>
<div class="t" style="top:1887.0px;height:40px;line-height:40px;font-size:20.0px;color:#f2f2f2;left:21.7px;letter-spacing:0.18px;"><span id="t58">Page 1 of 1</span></div>
<div class="t" style="top:1887.0px;height:40px;line-height:40px;font-size:20.0px;color:#f2f2f2;left:164.5px;letter-spacing:0.31px;"><span id="t59">0 words</span></div>
<div class="t" style="top:1887.0px;height:40px;line-height:40px;font-size:20.0px;color:#f2f2f2;left:338.0px;letter-spacing:0.29px;"><span id="t60">Chinese (Simplified, Mainland China)</span></div>
<div class="t" style="top:1887.0px;height:40px;line-height:40px;font-size:20.0px;color:#f2f2f2;left:714.5px;letter-spacing:0.25px;"><span id="t61">Text Predictions: On</span></div>
<div class="t" style="top:1887.0px;height:40px;line-height:40px;font-size:20.0px;color:#f2f2f2;left:973.5px;letter-spacing:0.34px;"><span id="t62">Accessibility: Good to go</span></div>
<div class="t" style="top:1887.0px;height:40px;line-height:40px;font-size:20.0px;color:#f2f2f2;left:1556.6px;letter-spacing:-0.59px;"><span id="t63">Focus</span></div>
<div class="t" style="top:1887.5px;height:40px;line-height:40px;font-size:20.0px;color:#f2f2f2;left:2163.0px;letter-spacing:-0.66px;"><span id="t64">100%</span></div>
<svg class="b" style="left:275.0px;top:1892.0px;" width="32" height="30" viewBox="0 0 32 30"><path d="M12 25H2V3Q8 2.5 13 6.5Q18 2.5 25.5 3V16" fill="none" stroke="#f2f2f2" stroke-width="2.1"/><path d="M13 6.5V18" stroke="#f2f2f2" stroke-width="2.1"/><path d="M11.5 21.5L18.3 27.5L28.5 16.5" fill="none" stroke="#f2f2f2" stroke-width="2.1"/></svg>
<svg class="b" style="left:936.0px;top:1890.0px;" width="36" height="32" viewBox="0 0 36 32"><circle cx="15" cy="5.3" r="3.3" fill="none" stroke="#f2f2f2" stroke-width="2"/><path d="M3.5 8.5Q2 11 5 12.5L10.5 14.5V20L7.5 27Q7 29.5 10 29" fill="none" stroke="#f2f2f2" stroke-width="2" stroke-linecap="round" stroke-linejoin="round"/><path d="M26.5 8.5Q28 11 25 12.5L19.5 14.5V18" fill="none" stroke="#f2f2f2" stroke-width="2" stroke-linecap="round" stroke-linejoin="round"/><path d="M3.5 8.5L11 10.5H19L26.5 8.5" fill="none" stroke="#f2f2f2" stroke-width="2" stroke-linecap="round" stroke-linejoin="round"/><path d="M17.5 23.5L22.5 28.5L32.5 18.5" fill="none" stroke="#f2f2f2" stroke-width="2.1"/></svg>
<svg class="b" style="left:1520.0px;top:1891.0px;" width="32" height="30" viewBox="0 0 32 30"><path d="M1.5 7V1.5H7M25 1.5H30.5V7M30.5 23V28.5H25M7 28.5H1.5V23" fill="none" stroke="#f2f2f2" stroke-width="2"/><path d="M8.5 5.5H17.5L23.5 11.5V24.5H8.5Z M17.5 5.5V11.5H23.5" fill="none" stroke="#f2f2f2" stroke-width="2"/></svg>
<svg class="b" style="left:1658.0px;top:1891.0px;" width="30" height="28" viewBox="0 0 30 28"><path d="M14.5 5Q9 1.5 2 2.5V23.5Q9 22.5 14.5 26Q20 22.5 27 23.5V2.5Q20 1.5 14.5 5ZM14.5 5V26" fill="none" stroke="#f2f2f2" stroke-width="2"/><path d="M5 8H11.5M5 12H11.5M5 16H11.5M5 20H11.5M17.5 8H24M17.5 12H24M17.5 16H24M17.5 20H24" stroke="#f2f2f2" stroke-width="1.7"/></svg>
<svg class="b" style="left:1740.0px;top:1891.0px;" width="26" height="30" viewBox="0 0 26 30"><rect x="2" y="2" width="21" height="26.5" fill="none" stroke="#f2f2f2" stroke-width="2"/><path d="M6 7.5H19M6 11.7H19M6 15.9H19M6 20.1H19M6 24.3H19" stroke="#f2f2f2" stroke-width="1.8"/></svg>
<svg class="b" style="left:1818.0px;top:1891.0px;" width="32" height="32" viewBox="0 0 32 32"><path d="M12 24.5H2V2H25.5V10" fill="none" stroke="#f2f2f2" stroke-width="2"/><path d="M2 5.5H25.5" stroke="#f2f2f2" stroke-width="2.4"/><path d="M5.5 10.5H21M5.5 14.5H13M5.5 18.5H11" stroke="#f2f2f2" stroke-width="1.7"/><circle cx="20" cy="20" r="8.3" fill="#535353" stroke="#f2f2f2" stroke-width="2"/><ellipse cx="20" cy="20" rx="3.8" ry="8.3" fill="none" stroke="#f2f2f2" stroke-width="1.6"/><path d="M11.7 20H28.3M13 15.5H27M13 24.5H27" stroke="#f2f2f2" stroke-width="1.5"/></svg>
<div class="b" style="left:1885.0px;top:1904.0px;width:15.0px;height:2.0px;background:#bdbdbd;"></div>
<div class="b" style="left:1912.0px;top:1904.0px;width:198.0px;height:2.0px;background:#a9a9a9;"></div>
<div class="b" style="left:2006.0px;top:1895.0px;width:10.0px;height:22.0px;background:#c8c8c8;"></div>
<div class="b" style="left:2121.0px;top:1904.0px;width:15.0px;height:2.0px;background:#bdbdbd;"></div>
<div class="b" style="left:2127.5px;top:1897.5px;width:2.0px;height:15.0px;background:#bdbdbd;"></div>
<div class="b" style="left:296.5px;top:285.0px;width:1657.0px;height:1358.5px;background:#535353;border:1.5px solid #808080;border-radius:14px;box-shadow:0 30px 110px 0 rgba(0,0,0,.36);"></div>
<div class="t" style="top:293.0px;height:46px;line-height:46px;font-size:23.0px;color:#ffffff;left:312.0px;letter-spacing:0.65px;"><span id="t65">Word Options</span></div>
<div class="t" style="top:289.0px;height:50px;line-height:50px;font-size:25px;color:#ffffff;left:1314.0px;width:1000px;text-align:center;"><span id="t66">?</span></div>
<svg class="b" style="left:1894.5px;top:303.0px;" width="22" height="22" viewBox="0 0 22 22"><path d="M1.5 1.5L20.5 20.5M20.5 1.5L1.5 20.5" stroke="#fff" stroke-width="2.2" fill="none"/></svg>
<div class="b" style="left:310.0px;top:359.0px;width:282.0px;height:1211.5px;background:#bfbfbf;border:2px solid #cdcdcd;border-radius:7px;"></div>
<div class="t" style="top:365.5px;height:46px;line-height:46px;font-size:23.0px;color:#262626;left:337.3px;"><span id="t67">General</span></div>
<div class="t" style="top:419.8px;height:46px;line-height:46px;font-size:23.0px;color:#262626;left:337.3px;letter-spacing:0.16px;"><span id="t68">Display</span></div>
<div class="t" style="top:473.4px;height:46px;line-height:46px;font-size:23.0px;color:#262626;left:337.3px;letter-spacing:0.66px;"><span id="t69">Proofing</span></div>
<div class="t" style="top:527.7px;height:46px;line-height:46px;font-size:23.0px;color:#262626;left:337.3px;letter-spacing:-0.86px;"><span id="t70">Save</span></div>
<div class="t" style="top:582.0px;height:46px;line-height:46px;font-size:23.0px;color:#262626;left:337.3px;letter-spacing:0.62px;"><span id="t71">Typography</span></div>
<div class="t" style="top:635.7px;height:46px;line-height:46px;font-size:23.0px;color:#262626;left:337.3px;letter-spacing:0.17px;"><span id="t72">Language</span></div>
<div class="t" style="top:689.7px;height:46px;line-height:46px;font-size:23.0px;color:#262626;left:337.3px;letter-spacing:0.18px;"><span id="t73">Accessibility</span></div>
<div class="t" style="top:751.0px;height:46px;line-height:46px;font-size:23.0px;color:#262626;left:337.3px;letter-spacing:0.30px;"><span id="t74">Advanced</span></div>
<div class="t" style="top:879.5px;height:46px;line-height:46px;font-size:23.0px;color:#262626;left:337.3px;letter-spacing:0.30px;"><span id="t75">Quick Access Toolbar</span></div>
<div class="t" style="top:945.5px;height:46px;line-height:46px;font-size:23.0px;color:#262626;left:337.3px;letter-spacing:0.71px;"><span id="t76">Add-ins</span></div>
<div class="t" style="top:999.8px;height:46px;line-height:46px;font-size:23.0px;color:#262626;left:337.3px;letter-spacing:0.21px;"><span id="t77">Trust Center</span></div>
<div class="b" style="left:323.5px;top:802.5px;width:255.5px;height:2.0px;background:#7f7f7f;"></div>
<div class="b" style="left:323.5px;top:929.7px;width:255.5px;height:2.0px;background:#7f7f7f;"></div>
<div class="b" style="left:312.6px;top:813.4px;width:278.0px;height:52.2px;background:#d4d4d4;border:3.5px solid #0a0a0a;border-radius:7px;"></div>
<div class="t" style="top:817.4px;height:46px;line-height:46px;font-size:23.0px;color:#262626;left:337.3px;letter-spacing:0.34px;"><span id="t78">Customize Ribbon</span></div>
<div class="t" style="top:378.5px;height:53px;line-height:53px;font-size:26.5px;color:#ffffff;left:722.5px;"><span id="t79">Customize the Ribbon and keyboard shortcuts.</span></div>
<div class="t" style="top:454.9px;height:47px;line-height:47px;font-size:23.5px;color:#ffffff;left:658.0px;letter-spacing:0.21px;"><span id="t80"><u>C</u>hoose commands from:</span></div>
<svg class="b" style="left:928.4px;top:459.0px;" width="26" height="26" viewBox="0 0 26 26"><circle cx="13" cy="13" r="11" fill="none" stroke="#3b9be3" stroke-width="2.2"/><circle cx="13" cy="8" r="1.7" fill="#3b9be3"/><rect x="11.6" y="11" width="2.8" height="8" fill="#3b9be3"/></svg>
<div class="t" style="top:454.9px;height:47px;line-height:47px;font-size:23.5px;color:#ffffff;left:1346.0px;letter-spacing:0.14px;"><span id="t81">Customize the Ri<u>b</u>bon:</span></div>
<svg class="b" style="left:1590.0px;top:459.0px;" width="26" height="26" viewBox="0 0 26 26"><circle cx="13" cy="13" r="11" fill="none" stroke="#3b9be3" stroke-width="2.2"/><circle cx="13" cy="8" r="1.7" fill="#3b9be3"/><rect x="11.6" y="11" width="2.8" height="8" fill="#3b9be3"/></svg>
<div class="b" style="left:658.8px;top:500.7px;width:490.2px;height:42.9px;background:#bfbfbf;border:2px solid #9b9b9b;border-radius:7px;"></div>
<div class="t" style="top:501.0px;height:46px;line-height:46px;font-size:23.0px;color:#262626;left:671.0px;letter-spacing:0.33px;"><span id="t82">Popular Commands</span></div>
<svg class="b" style="left:1126.5px;top:518.5px;" width="14" height="10" viewBox="0 0 14 10"><path d="M1.5 1.5L7.0 7.5L12.5 1.5" fill="none" stroke="#333" stroke-width="2"/></svg>
<div class="b" style="left:1346.0px;top:500.7px;width:489.5px;height:42.9px;background:#bfbfbf;border:2px solid #9b9b9b;border-radius:7px;"></div>
<div class="t" style="top:501.0px;height:46px;line-height:46px;font-size:23.0px;color:#262626;left:1358.0px;letter-spacing:0.49px;"><span id="t83">Main Tabs</span></div>
<svg class="b" style="left:1812.0px;top:518.5px;" width="14" height="10" viewBox="0 0 14 10"><path d="M1.5 1.5L7.0 7.5L12.5 1.5" fill="none" stroke="#333" stroke-width="2"/></svg>
<div class="b" style="left:658.8px;top:592.8px;width:490.2px;height:864.2px;background:#bfbfbf;border:2px solid #9b9b9b;border-radius:7px;"></div>
<div class="b" style="left:1114.0px;top:594.8px;width:33.0px;height:860.2px;background:#dadada;border-radius:12px;"></div>
<svg class="b" style="left:1120.5px;top:603.0px;" width="20" height="16" viewBox="0 0 20 16"><path d="M10 2.2L17.8 13.2H2.2Z" fill="#535353" stroke="#535353" stroke-width="2.4" stroke-linejoin="round"/></svg>
<svg class="b" style="left:1120.5px;top:1432.5px;" width="20" height="16" viewBox="0 0 20 16"><path d="M10 13.2L17.8 2.2H2.2Z" fill="#535353" stroke="#535353" stroke-width="2.4" stroke-linejoin="round"/></svg>
<div class="b" style="left:1122.5px;top:628.0px;width:16.0px;height:314.6px;background:#535353;border-radius:8px;"></div>
<div class="b" style="left:661.4px;top:786.0px;width:450.6px;height:34.0px;background:#d3d3d3;border-radius:6px;"></div>
<div class="t" style="top:591.0px;height:46px;line-height:46px;font-size:23.0px;color:#262626;left:697.0px;letter-spacing:0.13px;"><span id="t84">Accept Revision</span></div>
<div class="t" style="top:629.0px;height:46px;line-height:46px;font-size:23.0px;color:#262626;left:697.0px;letter-spacing:0.63px;"><span id="t85">Add Table</span></div>
<div class="t" style="top:667.0px;height:46px;line-height:46px;font-size:23.0px;color:#262626;left:697.0px;letter-spacing:0.50px;"><span id="t86">Align Left</span></div>
<div class="t" style="top:705.0px;height:46px;line-height:46px;font-size:23.0px;color:#262626;left:697.0px;letter-spacing:0.11px;"><span id="t87">Bullets</span></div>
<div class="t" style="top:743.0px;height:46px;line-height:46px;font-size:23.0px;color:#262626;left:697.0px;letter-spacing:0.16px;"><span id="t88">Center</span></div>
<div class="t" style="top:781.0px;height:46px;line-height:46px;font-size:23.0px;color:#262626;left:697.0px;letter-spacing:-0.06px;"><span id="t89">Change List Level</span></div>
<div class="t" style="top:819.0px;height:46px;line-height:46px;font-size:23.0px;color:#262626;left:697.0px;letter-spacing:0.24px;"><span id="t90">Copy</span></div>
<div class="t" style="top:857.0px;height:46px;line-height:46px;font-size:23.0px;color:#262626;left:697.0px;letter-spacing:0.26px;"><span id="t91">Cut</span></div>
<div class="t" style="top:895.0px;height:46px;line-height:46px;font-size:23.0px;color:#262626;left:697.0px;letter-spacing:0.33px;"><span id="t92">Define New Number Format...</span></div>
<div class="t" style="top:933.0px;height:46px;line-height:46px;font-size:23.0px;color:#262626;left:697.0px;letter-spacing:0.47px;"><span id="t93">Delete [Delete Comment]</span></div>
<div class="t" style="top:971.0px;height:46px;line-height:46px;font-size:23.0px;color:#262626;left:697.0px;letter-spacing:0.39px;"><span id="t94">Draw Table</span></div>
<div class="t" style="top:1009.0px;height:46px;line-height:46px;font-size:23.0px;color:#262626;left:697.0px;letter-spacing:0.31px;"><span id="t95">Draw Vertical Text Box</span></div>
<div class="t" style="top:1047.0px;height:46px;line-height:46px;font-size:23.0px;color:#262626;left:697.0px;letter-spacing:-0.18px;"><span id="t96">Email</span></div>
<div class="t" style="top:1085.0px;height:46px;line-height:46px;font-size:23.0px;color:#262626;left:697.0px;letter-spacing:0.12px;"><span id="t97">Find</span></div>
<div class="t" style="top:1123.0px;height:46px;line-height:46px;font-size:23.0px;color:#262626;left:697.0px;letter-spacing:0.76px;"><span id="t98">Fit to Window Width</span></div>
<div class="t" style="top:1161.0px;height:46px;line-height:46px;font-size:23.0px;color:#262626;left:697.0px;letter-spacing:0.37px;"><span id="t99">Font</span></div>
<div class="t" style="top:1199.0px;height:46px;line-height:46px;font-size:23.0px;color:#262626;left:697.0px;letter-spacing:0.38px;"><span id="t100">Font Color</span></div>
<div class="t" style="top:1237.0px;height:46px;line-height:46px;font-size:23.0px;color:#262626;left:697.0px;letter-spacing:0.29px;"><span id="t101">Font Settings</span></div>
<div class="t" style="top:1275.0px;height:46px;line-height:46px;font-size:23.0px;color:#262626;left:697.0px;letter-spacing:-0.13px;"><span id="t102">Font Size</span></div>
<div class="t" style="top:1313.0px;height:46px;line-height:46px;font-size:23.0px;color:#262626;left:697.0px;letter-spacing:0.69px;"><span id="t103">Footnote</span></div>
<div class="t" style="top:1351.0px;height:46px;line-height:46px;font-size:23.0px;color:#262626;left:697.0px;letter-spacing:0.26px;"><span id="t104">Format Painter</span></div>
<div class="t" style="top:1389.0px;height:46px;line-height:46px;font-size:23.0px;color:#262626;left:697.0px;letter-spacing:0.09px;"><span id="t105">Grow Font [Increase Font Size]</span></div>
<div class="b" style="left:660px;top:1430px;width:452px;height:25px;overflow:hidden">
<div class="t" style="top:-2.8px;height:46px;line-height:46px;font-size:23.0px;color:#262626;left:37.0px;letter-spacing:0.48px;"><span id="t106">Insert Comment</span></div>
</div>
<svg class="b" style="left:1092.0px;top:641.5px;" width="11" height="18" viewBox="0 0 11 18"><path d="M1.5 1.5L8.5 9.0L1.5 16.5" fill="none" stroke="#444" stroke-width="2"/></svg>
<svg class="b" style="left:1092.0px;top:793.5px;" width="11" height="18" viewBox="0 0 11 18"><path d="M1.5 1.5L8.5 9.0L1.5 16.5" fill="none" stroke="#444" stroke-width="2"/></svg>
<svg class="b" style="left:1092.0px;top:717.5px;" width="11" height="18" viewBox="0 0 11 18"><path d="M1.5 1.5L8.5 9.0L1.5 16.5" fill="none" stroke="#444" stroke-width="2"/></svg>
<div class="b" style="left:1080.0px;top:709.5px;width:2.0px;height:32.0px;background:#555;"></div>
<svg class="b" style="left:1092.0px;top:1211.5px;" width="11" height="18" viewBox="0 0 11 18"><path d="M1.5 1.5L8.5 9.0L1.5 16.5" fill="none" stroke="#444" stroke-width="2"/></svg>
<div class="b" style="left:1080.0px;top:1203.5px;width:2.0px;height:32.0px;background:#555;"></div>
<svg class="b" style="left:1079.0px;top:1166.5px;" width="34" height="33" viewBox="0 0 34 33"><rect x="1.2" y="1.2" width="30.5" height="30" rx="3" fill="#d6d6d6" stroke="#444" stroke-width="2"/><path d="M8 7H15M8 25H15M11.5 7V25" stroke="#333" stroke-width="2" fill="none"/><path d="M17.5 13.5L22.5 18.5L27.5 13.5" fill="none" stroke="#333" stroke-width="1.8"/></svg>
<svg class="b" style="left:1079.0px;top:1280.5px;" width="34" height="33" viewBox="0 0 34 33"><rect x="1.2" y="1.2" width="30.5" height="30" rx="3" fill="#d6d6d6" stroke="#444" stroke-width="2"/><path d="M8 7H15M8 25H15M11.5 7V25" stroke="#333" stroke-width="2" fill="none"/><path d="M17.5 13.5L22.5 18.5L27.5 13.5" fill="none" stroke="#333" stroke-width="1.8"/></svg>
<div class="b" style="left:1167.5px;top:984.0px;width:159.5px;height:46.0px;background:#868686;border:2px solid #969696;border-radius:7px;"></div>
<div class="t" style="top:984.5px;height:48px;line-height:48px;font-size:24.0px;color:#595959;left:747.5px;width:1000px;text-align:center;letter-spacing:1.10px;"><span id="t107"><u>A</u>dd &gt;&gt;</span></div>
<div class="b" style="left:1167.5px;top:1040.0px;width:159.5px;height:46.0px;background:#868686;border:2px solid #969696;border-radius:7px;"></div>
<div class="t" style="top:1040.5px;height:48px;line-height:48px;font-size:24.0px;color:#595959;left:747.5px;width:1000px;text-align:center;letter-spacing:-0.23px;"><span id="t108">&lt;&lt; <u>R</u>emove</span></div>
<div class="b" style="left:1346.0px;top:592.8px;width:489.5px;height:780.8px;background:#bfbfbf;border:2px solid #9b9b9b;border-radius:7px;"></div>
<div class="b" style="left:1800.0px;top:594.8px;width:33.5px;height:776.8px;background:#dadada;border-radius:12px;"></div>
<svg class="b" style="left:1806.8px;top:603.0px;" width="20" height="16" viewBox="0 0 20 16"><path d="M10 2.2L17.8 13.2H2.2Z" fill="#535353" stroke="#535353" stroke-width="2.4" stroke-linejoin="round"/></svg>
<svg class="b" style="left:1806.8px;top:1348.5px;" width="20" height="16" viewBox="0 0 20 16"><path d="M10 13.2L17.8 2.2H2.2Z" fill="#535353" stroke="#535353" stroke-width="2.4" stroke-linejoin="round"/></svg>
<div class="b" style="left:1808.8px;top:703.4px;width:16.0px;height:634.6px;background:#535353;border-radius:8px;"></div>
<div class="b" style="left:1372.4px;top:714.8px;width:425.6px;height:39.2px;background:#d3d3d3;border-radius:7px;"></div>
<svg class="b" style="left:1353.5px;top:636.5px;" width="12" height="20" viewBox="0 0 12 20"><path d="M1.5 1.5L9.5 10.0L1.5 18.5" fill="none" stroke="#333" stroke-width="2.2"/></svg>
<svg class="b" style="left:1373.0px;top:634.0px;" width="26" height="26" viewBox="0 0 26 26"><rect x="0" y="0" width="26" height="26" rx="4.5" fill="#1a54b2"/><path d="M6.5 13.5L11.2 18.2L20 8.8" fill="none" stroke="#fff" stroke-width="2.5"/></svg>
<div class="t" style="top:623.0px;height:46px;line-height:46px;font-size:23.0px;color:#262626;left:1404.4px;letter-spacing:0.86px;"><span id="t109">Outlining</span></div>
<svg class="b" style="left:1353.5px;top:680.5px;" width="12" height="20" viewBox="0 0 12 20"><path d="M1.5 1.5L9.5 10.0L1.5 18.5" fill="none" stroke="#333" stroke-width="2.2"/></svg>
<svg class="b" style="left:1373.0px;top:678.0px;" width="26" height="26" viewBox="0 0 26 26"><rect x="0" y="0" width="26" height="26" rx="4.5" fill="#1a54b2"/><path d="M6.5 13.5L11.2 18.2L20 8.8" fill="none" stroke="#fff" stroke-width="2.5"/></svg>
<div class="t" style="top:667.0px;height:46px;line-height:46px;font-size:23.0px;color:#262626;left:1404.4px;letter-spacing:0.26px;"><span id="t110">Background Removal</span></div>
<svg class="b" style="left:1353.5px;top:724.5px;" width="12" height="20" viewBox="0 0 12 20"><path d="M1.5 1.5L9.5 10.0L1.5 18.5" fill="none" stroke="#333" stroke-width="2.2"/></svg>
<svg class="b" style="left:1373.0px;top:722.0px;" width="26" height="26" viewBox="0 0 26 26"><rect x="0" y="0" width="26" height="26" rx="4.5" fill="#1a54b2"/><path d="M6.5 13.5L11.2 18.2L20 8.8" fill="none" stroke="#fff" stroke-width="2.5"/></svg>
<div class="t" style="top:711.0px;height:46px;line-height:46px;font-size:23.0px;color:#262626;left:1404.4px;letter-spacing:0.74px;"><span id="t111">Home</span></div>
<svg class="b" style="left:1353.5px;top:768.5px;" width="12" height="20" viewBox="0 0 12 20"><path d="M1.5 1.5L9.5 10.0L1.5 18.5" fill="none" stroke="#333" stroke-width="2.2"/></svg>
<svg class="b" style="left:1373.0px;top:766.0px;" width="26" height="26" viewBox="0 0 26 26"><rect x="0" y="0" width="26" height="26" rx="4.5" fill="#1a54b2"/><path d="M6.5 13.5L11.2 18.2L20 8.8" fill="none" stroke="#fff" stroke-width="2.5"/></svg>
<div class="t" style="top:755.0px;height:46px;line-height:46px;font-size:23.0px;color:#262626;left:1404.4px;letter-spacing:0.28px;"><span id="t112">Insert</span></div>
<svg class="b" style="left:1353.5px;top:812.5px;" width="12" height="20" viewBox="0 0 12 20"><path d="M1.5 1.5L9.5 10.0L1.5 18.5" fill="none" stroke="#333" stroke-width="2.2"/></svg>
<svg class="b" style="left:1373.0px;top:810.0px;" width="26" height="26" viewBox="0 0 26 26"><rect x="0" y="0" width="26" height="26" rx="4.5" fill="#1a54b2"/><path d="M6.5 13.5L11.2 18.2L20 8.8" fill="none" stroke="#fff" stroke-width="2.5"/></svg>
<div class="t" style="top:799.0px;height:46px;line-height:46px;font-size:23.0px;color:#262626;left:1404.4px;letter-spacing:0.27px;"><span id="t113">Draw</span></div>
<svg class="b" style="left:1353.5px;top:856.5px;" width="12" height="20" viewBox="0 0 12 20"><path d="M1.5 1.5L9.5 10.0L1.5 18.5" fill="none" stroke="#333" stroke-width="2.2"/></svg>
<svg class="b" style="left:1373.0px;top:854.0px;" width="26" height="26" viewBox="0 0 26 26"><rect x="0" y="0" width="26" height="26" rx="4.5" fill="#1a54b2"/><path d="M6.5 13.5L11.2 18.2L20 8.8" fill="none" stroke="#fff" stroke-width="2.5"/></svg>
<div class="t" style="top:843.0px;height:46px;line-height:46px;font-size:23.0px;color:#262626;left:1404.4px;letter-spacing:0.25px;"><span id="t114">Design</span></div>
<svg class="b" style="left:1353.5px;top:900.5px;" width="12" height="20" viewBox="0 0 12 20"><path d="M1.5 1.5L9.5 10.0L1.5 18.5" fill="none" stroke="#333" stroke-width="2.2"/></svg>
<svg class="b" style="left:1373.0px;top:898.0px;" width="26" height="26" viewBox="0 0 26 26"><rect x="0" y="0" width="26" height="26" rx="4.5" fill="#1a54b2"/><path d="M6.5 13.5L11.2 18.2L20 8.8" fill="none" stroke="#fff" stroke-width="2.5"/></svg>
<div class="t" style="top:887.0px;height:46px;line-height:46px;font-size:23.0px;color:#262626;left:1404.4px;letter-spacing:0.31px;"><span id="t115">Layout</span></div>
<svg class="b" style="left:1353.5px;top:944.5px;" width="12" height="20" viewBox="0 0 12 20"><path d="M1.5 1.5L9.5 10.0L1.5 18.5" fill="none" stroke="#333" stroke-width="2.2"/></svg>
<svg class="b" style="left:1373.0px;top:942.0px;" width="26" height="26" viewBox="0 0 26 26"><rect x="0" y="0" width="26" height="26" rx="4.5" fill="#1a54b2"/><path d="M6.5 13.5L11.2 18.2L20 8.8" fill="none" stroke="#fff" stroke-width="2.5"/></svg>
<div class="t" style="top:931.0px;height:46px;line-height:46px;font-size:23.0px;color:#262626;left:1404.4px;letter-spacing:-0.24px;"><span id="t116">References</span></div>
<svg class="b" style="left:1353.5px;top:988.5px;" width="12" height="20" viewBox="0 0 12 20"><path d="M1.5 1.5L9.5 10.0L1.5 18.5" fill="none" stroke="#333" stroke-width="2.2"/></svg>
<svg class="b" style="left:1373.0px;top:986.0px;" width="26" height="26" viewBox="0 0 26 26"><rect x="0" y="0" width="26" height="26" rx="4.5" fill="#1a54b2"/><path d="M6.5 13.5L11.2 18.2L20 8.8" fill="none" stroke="#fff" stroke-width="2.5"/></svg>
<div class="t" style="top:975.0px;height:46px;line-height:46px;font-size:23.0px;color:#262626;left:1404.4px;letter-spacing:0.59px;"><span id="t117">Mailings</span></div>
<svg class="b" style="left:1353.5px;top:1032.5px;" width="12" height="20" viewBox="0 0 12 20"><path d="M1.5 1.5L9.5 10.0L1.5 18.5" fill="none" stroke="#333" stroke-width="2.2"/></svg>
<svg class="b" style="left:1373.0px;top:1030.0px;" width="26" height="26" viewBox="0 0 26 26"><rect x="0" y="0" width="26" height="26" rx="4.5" fill="#1a54b2"/><path d="M6.5 13.5L11.2 18.2L20 8.8" fill="none" stroke="#fff" stroke-width="2.5"/></svg>
<div class="t" style="top:1019.0px;height:46px;line-height:46px;font-size:23.0px;color:#262626;left:1404.4px;letter-spacing:-0.22px;"><span id="t118">Review</span></div>
<svg class="b" style="left:1353.5px;top:1076.5px;" width="12" height="20" viewBox="0 0 12 20"><path d="M1.5 1.5L9.5 10.0L1.5 18.5" fill="none" stroke="#333" stroke-width="2.2"/></svg>
<svg class="b" style="left:1373.0px;top:1074.0px;" width="26" height="26" viewBox="0 0 26 26"><rect x="0" y="0" width="26" height="26" rx="4.5" fill="#1a54b2"/><path d="M6.5 13.5L11.2 18.2L20 8.8" fill="none" stroke="#fff" stroke-width="2.5"/></svg>
<div class="t" style="top:1063.0px;height:46px;line-height:46px;font-size:23.0px;color:#262626;left:1404.4px;letter-spacing:0.29px;"><span id="t119">View</span></div>
<svg class="b" style="left:1353.5px;top:1120.5px;" width="12" height="20" viewBox="0 0 12 20"><path d="M1.5 1.5L9.5 10.0L1.5 18.5" fill="none" stroke="#333" stroke-width="2.2"/></svg>
<svg class="b" style="left:1373.0px;top:1118.0px;" width="26" height="26" viewBox="0 0 26 26"><rect x="1" y="1" width="24" height="24" rx="4" fill="#c6c6c6" stroke="#6a6a6a" stroke-width="2"/></svg>
<div class="t" style="top:1107.0px;height:46px;line-height:46px;font-size:23.0px;color:#262626;left:1404.4px;letter-spacing:0.39px;"><span id="t120">Developer</span></div>
<svg class="b" style="left:1373.0px;top:1162.0px;" width="26" height="26" viewBox="0 0 26 26"><rect x="0" y="0" width="26" height="26" rx="4.5" fill="#1a54b2"/><path d="M6.5 13.5L11.2 18.2L20 8.8" fill="none" stroke="#fff" stroke-width="2.5"/></svg>
<div class="t" style="top:1151.0px;height:46px;line-height:46px;font-size:23.0px;color:#262626;left:1404.4px;letter-spacing:0.71px;"><span id="t121">Add-ins</span></div>
<svg class="b" style="left:1353.5px;top:1208.5px;" width="12" height="20" viewBox="0 0 12 20"><path d="M1.5 1.5L9.5 10.0L1.5 18.5" fill="none" stroke="#333" stroke-width="2.2"/></svg>
<svg class="b" style="left:1373.0px;top:1206.0px;" width="26" height="26" viewBox="0 0 26 26"><rect x="0" y="0" width="26" height="26" rx="4.5" fill="#1a54b2"/><path d="M6.5 13.5L11.2 18.2L20 8.8" fill="none" stroke="#fff" stroke-width="2.5"/></svg>
<div class="t" style="top:1195.0px;height:46px;line-height:46px;font-size:23.0px;color:#262626;left:1404.4px;letter-spacing:0.52px;"><span id="t122">Manage</span></div>
<svg class="b" style="left:1353.5px;top:1252.5px;" width="12" height="20" viewBox="0 0 12 20"><path d="M1.5 1.5L9.5 10.0L1.5 18.5" fill="none" stroke="#333" stroke-width="2.2"/></svg>
<svg class="b" style="left:1373.0px;top:1250.0px;" width="26" height="26" viewBox="0 0 26 26"><rect x="0" y="0" width="26" height="26" rx="4.5" fill="#1a54b2"/><path d="M6.5 13.5L11.2 18.2L20 8.8" fill="none" stroke="#fff" stroke-width="2.5"/></svg>
<div class="t" style="top:1239.0px;height:46px;line-height:46px;font-size:23.0px;color:#262626;left:1404.4px;letter-spacing:0.55px;"><span id="t123">Help</span></div>
<svg class="b" style="left:1373.0px;top:1294.0px;" width="26" height="26" viewBox="0 0 26 26"><rect x="0" y="0" width="26" height="26" rx="4.5" fill="#1a54b2"/><path d="M6.5 13.5L11.2 18.2L20 8.8" fill="none" stroke="#fff" stroke-width="2.5"/></svg>
<div class="t" style="top:1282.5px;height:47px;line-height:47px;font-size:23.5px;color:#262626;left:1405.0px;letter-spacing:0.6px;"><span id="t124">电子印章</span></div>
<svg class="b" style="left:1373.0px;top:1338.0px;" width="26" height="26" viewBox="0 0 26 26"><rect x="0" y="0" width="26" height="26" rx="4.5" fill="#1a54b2"/><path d="M6.5 13.5L11.2 18.2L20 8.8" fill="none" stroke="#fff" stroke-width="2.5"/></svg>
<div class="t" style="top:1327.0px;height:46px;line-height:46px;font-size:23.0px;color:#262626;left:1404.4px;letter-spacing:0.60px;"><span id="t125">Acrobat</span></div>
<div class="b" style="left:1348px;top:594.8px;width:450px;height:30px;overflow:hidden">
<svg class="b" style="left:5.5px;top:-2.3px;" width="12" height="20" viewBox="0 0 12 20"><path d="M1.5 1.5L9.5 10.0L1.5 18.5" fill="none" stroke="#333" stroke-width="2.2"/></svg>
<svg class="b" style="left:25.0px;top:-4.8px;" width="26" height="26" viewBox="0 0 26 26"><rect x="0" y="0" width="26" height="26" rx="4.5" fill="#1a54b2"/><path d="M6.5 13.5L11.2 18.2L20 8.8" fill="none" stroke="#fff" stroke-width="2.5"/></svg>
<div class="t" style="top:-15.8px;height:46px;line-height:46px;font-size:23.0px;color:#262626;left:56.4px;letter-spacing:0.15px;"><span id="t126">Insert (Blog Post)</span></div>
</div>
<div class="b" style="left:1853.6px;top:985.2px;width:58.7px;height:44.6px;background:#bfbfbf;border:2px solid #9b9b9b;border-radius:7px;"></div>
<svg class="b" style="left:1875.0px;top:1002.0px;" width="16" height="11" viewBox="0 0 16 11"><path d="M8 1.5L15 9.5H1Z" fill="#1a1a1a"/></svg>
<div class="b" style="left:1853.6px;top:1040.0px;width:58.7px;height:44.5px;background:#bfbfbf;border:2px solid #9b9b9b;border-radius:7px;"></div>
<svg class="b" style="left:1875.0px;top:1056.8px;" width="16" height="11" viewBox="0 0 16 11"><path d="M8 9.5L15 1.5H1Z" fill="#1a1a1a"/></svg>
<div class="b" style="left:1345.6px;top:1384.5px;width:126.0px;height:45.5px;background:#bfbfbf;border:2px solid #9b9b9b;border-radius:7px;"></div>
<div class="t" style="top:1385.2px;height:47px;line-height:47px;font-size:23.5px;color:#262626;left:908.6px;width:1000px;text-align:center;letter-spacing:0.61px;"><span id="t127">Ne<u>w</u> Tab</span></div>
<div class="b" style="left:1490.0px;top:1384.5px;width:155.0px;height:45.5px;background:#bfbfbf;border:2px solid #9b9b9b;border-radius:7px;"></div>
<div class="t" style="top:1385.2px;height:47px;line-height:47px;font-size:23.5px;color:#262626;left:1067.5px;width:1000px;text-align:center;letter-spacing:0.52px;"><span id="t128"><u>N</u>ew Group</span></div>
<div class="b" style="left:1664.0px;top:1384.5px;width:135.0px;height:45.5px;background:#bfbfbf;border:2px solid #9b9b9b;border-radius:7px;"></div>
<div class="t" style="top:1385.2px;height:47px;line-height:47px;font-size:23.5px;color:#262626;left:1231.5px;width:1000px;text-align:center;letter-spacing:-0.53px;"><span id="t129">Rena<u>m</u>e...</span></div>
<div class="t" style="top:1433.5px;height:47px;line-height:47px;font-size:23.5px;color:#ffffff;left:1345.6px;"><span id="t130">Customizations:</span></div>
<div class="b" style="left:1534.8px;top:1440.0px;width:111.2px;height:45.8px;background:#bfbfbf;border:2px solid #9b9b9b;border-radius:7px;"></div>
<div class="t" style="top:1440.9px;height:47px;line-height:47px;font-size:23.5px;color:#262626;left:1551.7px;letter-spacing:-0.82px;"><span id="t131">R<u>e</u>set</span></div>
<svg class="b" style="left:1617.0px;top:1461.5px;" width="14" height="10" viewBox="0 0 14 10"><path d="M1.5 1.5L7.0 7.5L12.5 1.5" fill="none" stroke="#333" stroke-width="2"/></svg>
<svg class="b" style="left:1646.8px;top:1439.0px;" width="26" height="26" viewBox="0 0 26 26"><circle cx="13" cy="13" r="11" fill="none" stroke="#3b9be3" stroke-width="2.2"/><circle cx="13" cy="8" r="1.7" fill="#3b9be3"/><rect x="11.6" y="11" width="2.8" height="8" fill="#3b9be3"/></svg>
<div class="b" style="left:1534.8px;top:1496.0px;width:201.0px;height:45.5px;background:#bfbfbf;border:2px solid #9b9b9b;border-radius:7px;"></div>
<div class="t" style="top:1496.8px;height:47px;line-height:47px;font-size:23.5px;color:#262626;left:1552.7px;letter-spacing:0.38px;"><span id="t132">Im<u>p</u>ort/Export</span></div>
<svg class="b" style="left:1706.5px;top:1517.0px;" width="14" height="10" viewBox="0 0 14 10"><path d="M1.5 1.5L7.0 7.5L12.5 1.5" fill="none" stroke="#333" stroke-width="2"/></svg>
<svg class="b" style="left:1737.0px;top:1495.0px;" width="26" height="26" viewBox="0 0 26 26"><circle cx="13" cy="13" r="11" fill="none" stroke="#3b9be3" stroke-width="2.2"/><circle cx="13" cy="8" r="1.7" fill="#3b9be3"/><rect x="11.6" y="11" width="2.8" height="8" fill="#3b9be3"/></svg>
<div class="t" style="top:1483.5px;height:47px;line-height:47px;font-size:23.5px;color:#ffffff;left:658.0px;letter-spacing:0.05px;"><span id="t133">Keyboard shortcuts:</span></div>
<div class="b" style="left:890.3px;top:1482.2px;width:160.7px;height:46.5px;background:#bfbfbf;border:2px solid #9b9b9b;border-radius:7px;"></div>
<div class="t" style="top:1483.5px;height:47px;line-height:47px;font-size:23.5px;color:#262626;left:470.6px;width:1000px;text-align:center;letter-spacing:-0.14px;"><span id="t134">Cus<u>t</u>omize...</span></div>
<div class="b" style="left:1625.0px;top:1580.4px;width:148.0px;height:45.6px;background:#bfbfbf;border:2.5px solid #ffffff;border-radius:8px;"></div>
<div class="b" style="left:1627.5px;top:1582.9px;width:143.0px;height:40.6px;background:#bfbfbf;border:2.5px solid #0a0a0a;border-radius:6px;"></div>
<div class="t" style="top:1581.0px;height:47px;line-height:47px;font-size:23.5px;color:#262626;left:1199.0px;width:1000px;text-align:center;letter-spacing:-0.64px;"><span id="t135">OK</span></div>
<div class="b" style="left:1791.5px;top:1580.4px;width:148.5px;height:45.6px;background:#bfbfbf;border:2px solid #9b9b9b;border-radius:7px;"></div>
<div class="t" style="top:1581.2px;height:47px;line-height:47px;font-size:23.5px;color:#262626;left:1365.8px;width:1000px;text-align:center;letter-spacing:-0.27px;"><span id="t136">Cancel</span></div>
<svg class="b" style="left:276.0px;top:774.0px;" width="364" height="122" viewBox="0 0 364 122"><ellipse cx="182" cy="61" rx="173" ry="52" fill="none" stroke="#ff2a05" stroke-width="5.5"/></svg>
<div class="t" style="top:736.0px;height:48px;line-height:48px;font-size:24px;color:#ff4a3c;left:25.0px;width:1000px;text-align:center;"><span id="t137">1</span></div>
<svg class="b" style="left:1322.0px;top:1133.0px;" width="216" height="74" viewBox="0 0 216 74"><ellipse cx="107.5" cy="37" rx="99" ry="29" fill="none" stroke="#ff2a05" stroke-width="5.5"/></svg>
<div class="t" style="top:1146.0px;height:48px;line-height:48px;font-size:24px;color:#ff4a3c;left:1053.5px;width:1000px;text-align:center;"><span id="t138">2</span></div>
<svg class="b" style="left:662px;top:595.5px;overflow:visible" width="34" height="32" viewBox="0 0 34 32"><path d="M5 1.2H19L27 9.2V20M12 30.5H5V1.2" fill="#e4e4e4" stroke="#555" stroke-width="1.8"/><path d="M5 1.2H19L27 9.2V21L14 30.5H5Z" fill="#e4e4e4"/><path d="M5.2 30.5V1.2H19L27 9.2V18" fill="none" stroke="#555" stroke-width="1.8"/><path d="M19 1.2V9.2H27" fill="none" stroke="#555" stroke-width="1.8"/><path d="M5.2 30.5H12" stroke="#555" stroke-width="1.8"/><rect x="9.5" y="11.5" width="4.5" height="2" fill="#b01818"/><rect x="12" y="18" width="4.5" height="2" fill="#b01818"/><path d="M8.5 24L17 31.5L31 15" fill="none" stroke="#d2d2d2" stroke-width="3.5"/><path d="M10.5 22.5L17.6 29.5L31.2 14" fill="none" stroke="#117a11" stroke-width="2.2"/></svg>
<svg class="b" style="left:662px;top:633.5px;overflow:visible" width="34" height="32" viewBox="0 0 34 32"><rect x="1" y="1.5" width="30" height="29.5" fill="#e4e4e4" stroke="#3a3a3a" stroke-width="2"/><rect x="2" y="2.5" width="28" height="4.5" fill="#999"/><path d="M1 8H31M1 15.7H31M1 23.3H31M11 8V31M21 8V31" stroke="#2a2a2a" stroke-width="2" fill="none"/></svg>
<svg class="b" style="left:662px;top:670.5px;overflow:visible" width="34" height="32" viewBox="0 0 34 32"><rect x="2" y="3.5" width="28" height="2" fill="#444"/><rect x="2" y="11.5" width="19.8" height="2" fill="#444"/><rect x="2" y="19.4" width="28" height="2" fill="#444"/><rect x="2" y="27.5" width="19.8" height="2" fill="#444"/></svg>
<svg class="b" style="left:662px;top:708.5px;overflow:visible" width="34" height="32" viewBox="0 0 34 32"><rect x="0" y="1.7000000000000002" width="6" height="6" fill="#0a60b0"/><rect x="10" y="3.7" width="20" height="2" fill="#444"/><rect x="0" y="13.3" width="6" height="6" fill="#0a60b0"/><rect x="10" y="15.3" width="20" height="2" fill="#444"/><rect x="0" y="25.5" width="6" height="6" fill="#0a60b0"/><rect x="10" y="27.5" width="20" height="2" fill="#444"/></svg>
<svg class="b" style="left:662px;top:746.5px;overflow:visible" width="34" height="32" viewBox="0 0 34 32"><rect x="2" y="3.3" width="28" height="2" fill="#444"/><rect x="6" y="11.7" width="20" height="2" fill="#444"/><rect x="2" y="19.5" width="28" height="2" fill="#444"/><rect x="6" y="27.5" width="20" height="2" fill="#444"/></svg>
<svg class="b" style="left:662px;top:784.5px;overflow:visible" width="34" height="32" viewBox="0 0 34 32"><rect x="12.2" y="3.5" width="19.8" height="2" fill="#444"/><rect x="12.2" y="26.8" width="19.8" height="2" fill="#444"/><rect x="24" y="15.5" width="8" height="2" fill="#444"/><path d="M1.5 16.5H21.5M6.5 11.5L1.5 16.5L6.5 21.5M16.5 11.5L21.5 16.5L16.5 21.5" fill="none" stroke="#0a60b0" stroke-width="2.1"/></svg>
<svg class="b" style="left:662px;top:825.5px;overflow:visible" width="34" height="32" viewBox="0 0 34 32"><path d="M1.3 -0.8H11.5L15 3V25.5H1.3Z" fill="#e4e4e4" stroke="#555" stroke-width="1.8"/><path d="M13.3 5.5H23L31 13.5V29.8H13.3Z" fill="#e4e4e4" stroke="#555" stroke-width="1.8"/><path d="M23 5.5V13.5H31" fill="none" stroke="#555" stroke-width="1.8"/><path d="M17.6 19H26.4M17.6 22.6H26.4" stroke="#222" stroke-width="1.9"/></svg>
<svg class="b" style="left:662px;top:863.5px;overflow:visible" width="34" height="32" viewBox="0 0 34 32"><path d="M10.5 0L20.8 24.5M21.5 0L11.2 24.5" stroke="#555" stroke-width="1.8" fill="none"/><circle cx="9.8" cy="26.6" r="3.3" fill="none" stroke="#0a60b0" stroke-width="2"/><circle cx="22.2" cy="26.6" r="3.3" fill="none" stroke="#0a60b0" stroke-width="2"/></svg>
<svg class="b" style="left:662px;top:939.5px;overflow:visible" width="34" height="32" viewBox="0 0 34 32"><path d="M4 1.5H29.2V19.5H13L7 27.5V19.5H4Z" fill="#e4e4e4" stroke="#555" stroke-width="1.9"/><path d="M1 0L14 13M14 0L1 13" stroke="#d8d8d8" stroke-width="4.5"/><path d="M0.8 -0.8L13.2 12M13.2 -0.8L0.8 12" stroke="#c4282d" stroke-width="2" fill="none"/></svg>
<svg class="b" style="left:662px;top:977.5px;overflow:visible" width="34" height="32" viewBox="0 0 34 32"><rect x="1" y="1.8" width="30" height="26.5" fill="#e4e4e4" stroke="#3a3a3a" stroke-width="2"/><path d="M1 10H31M1 19H31M11 2V28M21 2V28" stroke="#2a2a2a" stroke-width="2" fill="none"/><path d="M30 -1L33 4L16 22L8 24L11 16Z" fill="#d6d6d6" stroke="#d6d6d6" stroke-width="3"/><path d="M27 1.2Q29.5 -1.2 31.3 0.7Q33 2.6 30.8 4.8L16.5 19L11.5 20.5L13 15.5Z" fill="#eaf3fb" stroke="#0a60b0" stroke-width="2" stroke-linejoin="round"/><path d="M13 15.5L16.5 19L11.5 20.5Z" fill="#0a60b0"/></svg>
<svg class="b" style="left:662px;top:1015.5px;overflow:visible" width="34" height="32" viewBox="0 0 34 32"><rect x="3.2" y="3.4" width="26" height="25.5" fill="#e4e4e4" stroke="#444" stroke-width="2"/><text x="0" y="0" transform="translate(7 6.5) rotate(90)" font-family="Liberation Sans,sans-serif" font-weight="700" font-size="22" fill="#0a60b0">A</text><rect x="0.9" y="1" width="5" height="5" fill="#fff" stroke="#0a60b0" stroke-width="1.8"/><rect x="0.9" y="26.3" width="5" height="5" fill="#fff" stroke="#0a60b0" stroke-width="1.8"/><rect x="26.6" y="1" width="5" height="5" fill="#fff" stroke="#0a60b0" stroke-width="1.8"/><rect x="26.6" y="26.3" width="5" height="5" fill="#fff" stroke="#0a60b0" stroke-width="1.8"/></svg>
<svg class="b" style="left:662px;top:1051.5px;overflow:visible" width="34" height="32" viewBox="0 0 34 32"><rect x="1.2" y="5" width="30" height="20.5" fill="#e4e4e4" stroke="#555" stroke-width="2"/><path d="M16.5 16L31 5.5" stroke="#555" stroke-width="1.8"/><path d="M0 8V17H13V8Z" fill="#c0c0c0"/><path d="M9.5 5.5V13Q9.5 15.5 7.2 15.5Q5 15.5 5 13V4.5Q5 0.5 8.5 0.5Q12.5 0.5 12.5 4.5V14Q12.5 18.8 7.3 18.8Q1.8 18.8 1.8 14V5.5" fill="none" stroke="#555" stroke-width="1.7"/></svg>
<svg class="b" style="left:662px;top:1091.5px;overflow:visible" width="34" height="32" viewBox="0 0 34 32"><circle cx="21" cy="9.5" r="10" fill="#e4e4e4" stroke="#555" stroke-width="2"/><path d="M13.5 17L2 28.5" stroke="#555" stroke-width="2.1" stroke-linecap="round"/></svg>
<svg class="b" style="left:662px;top:1129.5px;overflow:visible" width="34" height="32" viewBox="0 0 34 32"><path d="M5 14.5V-0.5H27V14.5" fill="#e4e4e4" stroke="#555" stroke-width="2.2"/><path d="M1.5 23H12M6.5 18L1.5 23L6.5 28M20 23H30.5M25.5 18L30.5 23L25.5 28" fill="none" stroke="#0a60b0" stroke-width="2.1"/></svg>
<svg class="b" style="left:662px;top:1205.5px;overflow:visible" width="34" height="32" viewBox="0 0 34 32"><text x="16.2" y="20.3" font-family="Liberation Sans,sans-serif" font-size="29" fill="#555" text-anchor="middle" stroke="#c0c0c0" stroke-width="0.7">A</text><rect x="0" y="22.5" width="32" height="7.7" fill="#222"/></svg>
<svg class="b" style="left:662px;top:1243.5px;overflow:visible" width="34" height="32" viewBox="0 0 34 32"><text x="16" y="30" font-family="Liberation Sans,sans-serif" font-size="42" fill="#555" text-anchor="middle" stroke="#c0c0c0" stroke-width="1.1">A</text></svg>
<svg class="b" style="left:662px;top:1317.3px;overflow:visible" width="34" height="32" viewBox="0 0 34 32"><text x="1.5" y="25.5" font-family="Liberation Sans,sans-serif" font-size="28" fill="#5c5c5c" stroke="#c0c0c0" stroke-width="0.8" letter-spacing="-1.2">ab</text><text x="25.5" y="8.5" font-family="Liberation Sans,sans-serif" font-weight="700" font-size="11" fill="#b8212f">1</text></svg>
<svg class="b" style="left:662px;top:1357.5px;overflow:visible" width="34" height="32" viewBox="0 0 34 32"><g transform="translate(-1.6,-3.1) scale(.95)"><path d="M24 10.5L31 2.5Q33 1 34 3Q34.5 4.5 33.5 5.5L26.5 13.5" fill="#eee" stroke="#3b3b3b" stroke-width="1.9"/><path d="M15.5 6.5L29.5 17.5L26.5 21L12.5 10Z" fill="#e6e6e6" stroke="#3b3b3b" stroke-width="1.9"/><path d="M12.5 10L26.5 21L16 31L2.5 14Z" fill="#e6e6e6" stroke="#3b3b3b" stroke-width="1.9" stroke-linejoin="round"/><path d="M6.5 19L21 25.5L16 31L2.5 14Z" fill="#f6c65c" stroke="#5a4310" stroke-width="1.9" stroke-linejoin="round"/></g></svg>
<svg class="b" style="left:662px;top:1395.5px;overflow:visible" width="34" height="32" viewBox="0 0 34 32"><text x="12.5" y="24" font-family="Liberation Sans,sans-serif" font-size="35" fill="#555" text-anchor="middle" stroke="#c0c0c0" stroke-width="0.9">A</text><path d="M23 5.8L27.3 1.5L31.6 5.8" fill="none" stroke="#0a60b0" stroke-width="2.2"/></svg>
<svg class="b" style="left:662px;top:1430.5px;overflow:hidden" width="34" height="20" viewBox="0 0 34 20"><path d="M4 4.5H29.5V24.5H13L7 32V24.5H4Z" fill="#e4e4e4" stroke="#555" stroke-width="1.9"/><path d="M0 8.5H15M7 1V16" stroke="#d8d8d8" stroke-width="4.5"/><path d="M0 8.5H13.7M6.8 1.8V15.5" stroke="#0d6b0d" stroke-width="2.2"/></svg>
<svg class="b" style="left:657px;top:373px" width="58" height="64" viewBox="0 0 58 64">
<path d="M1.5 2H26L41.5 17.5V31 M27 56.5H1.5V2" fill="none" stroke="#d0d0d0" stroke-width="2"/>
<path d="M26 2V17.5H41.5" fill="none" stroke="#d0d0d0" stroke-width="2"/>
<path d="M16 24H26.5V31.5H16Z M10 35H21V42.5H10Z M16 46H26.5V53.5H16Z M16 28H13V50H16 M10 39H13" fill="none" stroke="#d0d0d0" stroke-width="1.9"/>
<path d="M25 30.5H54.5V60.5H30L25 55.5Z" fill="#535353" stroke="#e67be6" stroke-width="2.1"/>
<path d="M31 30.5V42.5H48.5V30.5 M32.5 60.5V50H46.5V60.5" fill="none" stroke="#e67be6" stroke-width="2.1"/>
</svg>
</body></html>
